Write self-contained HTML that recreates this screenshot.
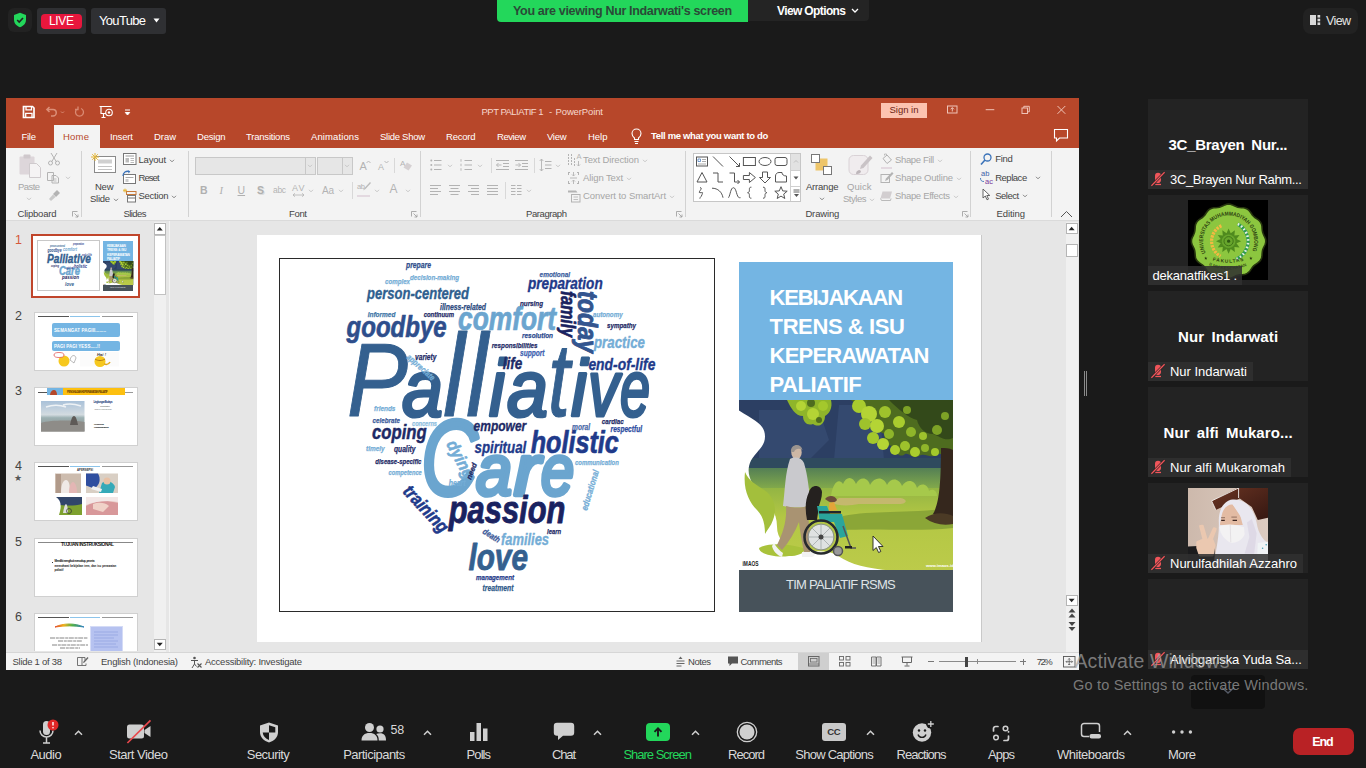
<!DOCTYPE html>
<html lang="en">
<head>
<meta charset="utf-8">
<title>Zoom Meeting</title>
<style>
*{box-sizing:border-box;margin:0;padding:0}
html,body{width:1366px;height:768px;overflow:hidden;background:#1a1a1a;font-family:"Liberation Sans",sans-serif;color:#fff}
#root{position:relative;width:1366px;height:768px;overflow:hidden;background:#1a1a1a}
.a{position:absolute;display:block}
.t{position:absolute;white-space:nowrap;display:block}
svg{overflow:visible}
</style>
</head>
<body>
<div id="root">
<!-- zoom top bar -->
<div class="a" style="left:8px;top:8px;width:24px;height:24px;background:#222;border-radius:6px"></div>
<svg class="a" style="left:13px;top:12px;" width="14" height="16" viewBox="0 0 14 16" fill="none"><path d="M7 .8l6 2.2v4.5c0 4-2.6 6.5-6 7.7-3.4-1.2-6-3.7-6-7.7v-4.5z" fill="#23d75b"/><path d="M4.2 8l2 2 3.8-4" stroke="#222" stroke-width="1.6"/></svg>
<div class="a" style="left:37px;top:8px;width:49px;height:26px;background:#2f3033;border-radius:3px"></div>
<div class="a" style="left:41px;top:13.5px;width:41px;height:15px;background:#e8173d;border-radius:4px"></div>
<span class="t" style="left:49px;top:13.5px;font-size:12px;line-height:15.6px;color:#fff;letter-spacing:-0.34px;">LIVE</span>
<div class="a" style="left:91px;top:8px;width:75px;height:26px;background:#2f3033;border-radius:3px"></div>
<span class="t" style="left:99px;top:12.6px;font-size:13px;line-height:16.9px;color:#fff;letter-spacing:-0.68px;">YouTube</span>
<svg class="a" style="left:152px;top:18px;" width="10" height="6" viewBox="0 0 10 6" fill="none"><path d="M1.5 .5h6l-3 4z" fill="#fff"/></svg>
<div class="a" style="left:497px;top:0px;width:251px;height:22px;background:#23d75b;border-radius:0 0 0 4px"></div>
<span class="t" style="left:513px;top:3.2px;font-size:12.5px;line-height:16.2px;color:#2a4a37;font-weight:bold;letter-spacing:-0.33px;">You are viewing Nur Indarwati's screen</span>
<div class="a" style="left:748px;top:0px;width:121px;height:21px;background:#242424;border-radius:0 0 4px 0"></div>
<span class="t" style="left:777px;top:3.5px;font-size:12px;line-height:15.6px;color:#fff;font-weight:bold;letter-spacing:-0.62px;">View Options</span>
<svg class="a" style="left:851px;top:8px;" width="8" height="6" viewBox="0 0 8 6" fill="none"><path d="M1 1l3 3 3-3" stroke="#fff" stroke-width="1.3"/></svg>
<div class="a" style="left:1303px;top:8px;width:55px;height:26px;background:#222;border-radius:8px"></div>
<svg class="a" style="left:1310px;top:15px;" width="11" height="10" viewBox="0 0 11 10" fill="none"><rect x="0" y="0" width="6" height="10" fill="#d8d8d8"/><rect x="7.5" y="0" width="2.7" height="2.6" fill="#d8d8d8"/><rect x="7.5" y="3.7" width="2.7" height="2.6" fill="#d8d8d8"/><rect x="7.5" y="7.4" width="2.7" height="2.6" fill="#d8d8d8"/></svg>
<span class="t" style="left:1326px;top:12.9px;font-size:12.5px;line-height:16.2px;color:#e4e4e4;letter-spacing:-0.62px;">View</span>
<!-- powerpoint frame -->
<div class="a" style="left:6px;top:98px;width:1073px;height:572px;background:#e6e6e6;"></div>
<div class="a" style="left:6px;top:98px;width:1073px;height:50px;background:#b7472a;"></div>
<svg class="a" style="left:21px;top:104px;" width="120" height="16" viewBox="0 0 120 16" fill="none"><path d="M2.5 2.5h9l1.5 1.5v9.5h-10.5z" stroke="#fff" stroke-width="1.7"/><path d="M5 2.5v3.3h5.5v-3.3 M4.7 13.5v-4.2h6.3v4.2" stroke="#fff" stroke-width="1.3"/><path d="M26 5.5h6a3.2 3.2 0 0 1 0 6.5h-2 M28.5 3l-2.6 2.5 2.6 2.5" stroke="#dc8f78" stroke-width="1.5"/><path d="M40 7.5l1.5 1.5 1.5-1.5" stroke="#d98a73" stroke-width="1"/><path d="M57 4.5a4 4 0 1 0 3 0 M57 2.5v3h-3" stroke="#d98a73" stroke-width="1.3"/><path d="M78.5 2.5h12 M80 2.5v7h5 M84.5 13.5h-4 M82.5 9.5v4" stroke="#fff" stroke-width="1.2"/><circle cx="88" cy="8.5" r="3.3" stroke="#fff" stroke-width="1.1"/><circle cx="88" cy="8.5" r="1.2" fill="#fff"/><path d="M104 6h5 M104.3 8.5h4.4l-2.2 2.5z" stroke="#fff" stroke-width="1" fill="#fff"/></svg>
<span class="t" style="left:481.5px;top:105.8px;font-size:9.5px;line-height:12.3px;color:#f6d8ce;letter-spacing:-0.51px;">PPT PALIATIF 1</span>
<span class="t" style="left:549px;top:105.8px;font-size:9.5px;line-height:12.3px;color:#f6d8ce;">-</span>
<span class="t" style="left:555.5px;top:105.8px;font-size:9.5px;line-height:12.3px;color:#f6d8ce;letter-spacing:-0.12px;">PowerPoint</span>
<div class="a" style="left:881px;top:103px;width:46px;height:15px;background:#fcc3b0;"></div>
<span class="t" style="left:889.5px;top:104.3px;font-size:9.5px;line-height:12.3px;color:#6e2413;letter-spacing:-0.01px;">Sign in</span>
<svg class="a" style="left:942px;top:102px;" width="132" height="16" viewBox="0 0 132 16" fill="none"><rect x="5.5" y="4" width="9.5" height="7" stroke="#efc4b7" stroke-width="1"/><path d="M10.3 9.5v-3.8 M8.6 7.3l1.7-1.7 1.7 1.7" stroke="#efc4b7" stroke-width="1"/><path d="M43.7 7.7h8.6" stroke="#efc4b7" stroke-width="1"/><rect x="80" y="6" width="5.5" height="5.5" stroke="#efc4b7" stroke-width="1"/><path d="M81.8 6v-1.7h5.5v5.5h-1.8" stroke="#efc4b7" stroke-width="1"/><path d="M115.5 4l7.8 7.8 M123.3 4l-7.8 7.8" stroke="#efc4b7" stroke-width="1"/></svg>
<div class="a" style="left:54px;top:125px;width:45.5px;height:23px;background:#f3f3f3;"></div>
<span class="t" style="left:21.5px;top:130.7px;font-size:9.5px;line-height:12.3px;color:#fff;letter-spacing:-0.27px;">File</span>
<span class="t" style="left:63px;top:130.7px;font-size:9.5px;line-height:12.3px;color:#b7472a;letter-spacing:0.22px;">Home</span>
<span class="t" style="left:110px;top:130.7px;font-size:9.5px;line-height:12.3px;color:#fff;letter-spacing:-0.15px;">Insert</span>
<span class="t" style="left:154px;top:130.7px;font-size:9.5px;line-height:12.3px;color:#fff;letter-spacing:-0.06px;">Draw</span>
<span class="t" style="left:197px;top:130.7px;font-size:9.5px;line-height:12.3px;color:#fff;letter-spacing:-0.21px;">Design</span>
<span class="t" style="left:246px;top:130.7px;font-size:9.5px;line-height:12.3px;color:#fff;letter-spacing:-0.21px;">Transitions</span>
<span class="t" style="left:311px;top:130.7px;font-size:9.5px;line-height:12.3px;color:#fff;letter-spacing:0.11px;">Animations</span>
<span class="t" style="left:380px;top:130.7px;font-size:9.5px;line-height:12.3px;color:#fff;letter-spacing:-0.28px;">Slide Show</span>
<span class="t" style="left:446px;top:130.7px;font-size:9.5px;line-height:12.3px;color:#fff;letter-spacing:-0.23px;">Record</span>
<span class="t" style="left:497px;top:130.7px;font-size:9.5px;line-height:12.3px;color:#fff;letter-spacing:-0.43px;">Review</span>
<span class="t" style="left:547px;top:130.7px;font-size:9.5px;line-height:12.3px;color:#fff;letter-spacing:-0.31px;">View</span>
<span class="t" style="left:588px;top:130.7px;font-size:9.5px;line-height:12.3px;color:#fff;letter-spacing:-0.01px;">Help</span>
<svg class="a" style="left:630px;top:127px;" width="14" height="18" viewBox="0 0 14 18" fill="none"><path d="M4.5 12.5v-1.5c-2-1.5-2.5-3-2.5-4.5a4.5 4.5 0 0 1 9 0c0 1.5-.5 3-2.5 4.5v1.5z M4.5 14.5h4 M5 16.5h3" stroke="#fff" stroke-width="1.1"/></svg>
<span class="t" style="left:651px;top:130.3px;font-size:9.5px;line-height:12.3px;color:#fff;font-weight:bold;letter-spacing:-0.33px;">Tell me what you want to do</span>
<svg class="a" style="left:1053px;top:127px;" width="16" height="16" viewBox="0 0 16 16" fill="none"><path d="M1.5 2.5h13v8.5h-8l-3 3v-3h-2z" stroke="#fff" stroke-width="1.1"/></svg>
<div class="a" style="left:6px;top:148px;width:1073px;height:72px;background:#f3f3f3;"></div>
<div class="a" style="left:6px;top:220px;width:1073px;height:1px;background:#dadada;"></div>
<div class="a" style="left:81px;top:151px;width:1px;height:66px;background:#d2d2d2;"></div>
<div class="a" style="left:188px;top:151px;width:1px;height:66px;background:#d2d2d2;"></div>
<div class="a" style="left:420px;top:151px;width:1px;height:66px;background:#d2d2d2;"></div>
<div class="a" style="left:685px;top:151px;width:1px;height:66px;background:#d2d2d2;"></div>
<div class="a" style="left:970px;top:151px;width:1px;height:66px;background:#d2d2d2;"></div>
<div class="a" style="left:1051px;top:151px;width:1px;height:66px;background:#d2d2d2;"></div>
<span class="t" style="left:17.5px;top:208.2px;font-size:9.5px;line-height:12.3px;color:#444;letter-spacing:-0.21px;">Clipboard</span>
<span class="t" style="left:123.5px;top:208.2px;font-size:9.5px;line-height:12.3px;color:#444;letter-spacing:-0.58px;">Slides</span>
<span class="t" style="left:289px;top:208.2px;font-size:9.5px;line-height:12.3px;color:#444;letter-spacing:-0.34px;">Font</span>
<span class="t" style="left:526px;top:208.2px;font-size:9.5px;line-height:12.3px;color:#444;letter-spacing:-0.42px;">Paragraph</span>
<span class="t" style="left:805.4px;top:208.2px;font-size:9.5px;line-height:12.3px;color:#444;letter-spacing:-0.14px;">Drawing</span>
<span class="t" style="left:996.5px;top:208.2px;font-size:9.5px;line-height:12.3px;color:#444;letter-spacing:-0.09px;">Editing</span>
<svg class="a" style="left:72px;top:211px;" width="7" height="7" viewBox="0 0 7 7" fill="none"><path d="M.5 .5h5 M.5 .5v5 M2.5 2.5l3.5 3.5 M6 3.5v2.5h-2.5" stroke="#999" stroke-width=".8"/></svg>
<svg class="a" style="left:411px;top:211px;" width="7" height="7" viewBox="0 0 7 7" fill="none"><path d="M.5 .5h5 M.5 .5v5 M2.5 2.5l3.5 3.5 M6 3.5v2.5h-2.5" stroke="#999" stroke-width=".8"/></svg>
<svg class="a" style="left:676px;top:211px;" width="7" height="7" viewBox="0 0 7 7" fill="none"><path d="M.5 .5h5 M.5 .5v5 M2.5 2.5l3.5 3.5 M6 3.5v2.5h-2.5" stroke="#999" stroke-width=".8"/></svg>
<svg class="a" style="left:962px;top:211px;" width="7" height="7" viewBox="0 0 7 7" fill="none"><path d="M.5 .5h5 M.5 .5v5 M2.5 2.5l3.5 3.5 M6 3.5v2.5h-2.5" stroke="#999" stroke-width=".8"/></svg>
<svg class="a" style="left:18px;top:153px;" width="25" height="26" viewBox="0 0 25 26" fill="none"><rect x="1.5" y="3.5" width="15" height="18" rx="1" fill="#ddd6da"/><rect x="5.5" y="1.5" width="7" height="4" rx="1" fill="#cfc8cc"/><path d="M11.5 10.5h7l4 4v10h-11z" fill="#f5f3f4" stroke="#cfcacd" stroke-width="1"/></svg>
<span class="t" style="left:18px;top:180.5px;font-size:9.5px;line-height:12.3px;color:#a6a6a6;letter-spacing:-0.57px;">Paste</span>
<svg class="a" style="left:25.5px;top:197px;" width="6" height="4" viewBox="0 0 6 4" fill="none"><path d="M1 .8l2 2 2-2" stroke="#c2c2c2" stroke-width=".9"/></svg>
<svg class="a" style="left:47px;top:152px;" width="14" height="14" viewBox="0 0 14 14" fill="none"><path d="M4 1l5.5 9 M10 1l-5.5 9" stroke="#b3b3b3" stroke-width="1"/><circle cx="3.5" cy="11" r="2" stroke="#b3b3b3"/><circle cx="10.5" cy="11" r="2" stroke="#b3b3b3"/></svg>
<svg class="a" style="left:46px;top:171px;" width="15" height="13" viewBox="0 0 15 13" fill="none"><path d="M1.5 1.5h6v8h-6z M6 4.5h4l2.5 2.5v5h-6.5z" stroke="#b3b3b3" stroke-width="1" fill="#f3f3f3"/><path d="M7.5 8h3 M7.5 10h3" stroke="#b3b3b3" stroke-width=".8"/></svg>
<svg class="a" style="left:65px;top:176px;" width="6" height="4" viewBox="0 0 6 4" fill="none"><path d="M1 .8l2 2 2-2" stroke="#c2c2c2" stroke-width=".9"/></svg>
<svg class="a" style="left:48px;top:189px;" width="13" height="13" viewBox="0 0 13 13" fill="none"><path d="M9 1l3 3-4 4-3-3z" fill="#b3b3b3"/><path d="M5 5.5l2.5 2.5-4.5 4-2-2z" fill="#c9c9c9"/></svg>
<svg class="a" style="left:90px;top:152px;" width="27" height="23" viewBox="0 0 27 23" fill="none"><rect x="4.5" y="4.5" width="21" height="16" fill="#fff" stroke="#8a8a8a"/><rect x="8" y="7.5" width="14" height="4" fill="#d0d0d0"/><path d="M8 14.5h14 M8 17.5h14" stroke="#c4c4c4"/><path d="M5 1v8 M1 5h8 M2.2 2.2l5.6 5.6 M7.8 2.2l-5.6 5.6" stroke="#e4b73a" stroke-width="1"/></svg>
<span class="t" style="left:95px;top:180.5px;font-size:9.5px;line-height:12.3px;color:#444;letter-spacing:-0.25px;">New</span>
<span class="t" style="left:90px;top:193.2px;font-size:9.5px;line-height:12.3px;color:#444;letter-spacing:-0.28px;">Slide</span>
<svg class="a" style="left:112.5px;top:198px;" width="6" height="4" viewBox="0 0 6 4" fill="none"><path d="M1 .8l2 2 2-2" stroke="#777" stroke-width=".9"/></svg>
<svg class="a" style="left:123px;top:153px;" width="14" height="13" viewBox="0 0 14 13" fill="none"><rect x=".5" y=".5" width="12.5" height="11" fill="#fff" stroke="#777"/><path d="M2.5 3h8.5" stroke="#999"/><rect x="2.5" y="5" width="3.5" height="4.5" fill="#bbb"/><path d="M7.5 5.5h3.5 M7.5 7.5h3.5 M7.5 9.5h3.5" stroke="#aaa" stroke-width=".8"/></svg>
<span class="t" style="left:138.5px;top:153.8px;font-size:9.5px;line-height:12.3px;color:#444;letter-spacing:-0.2px;">Layout</span>
<svg class="a" style="left:169px;top:158.5px;" width="6" height="4" viewBox="0 0 6 4" fill="none"><path d="M1 .8l2 2 2-2" stroke="#777" stroke-width=".9"/></svg>
<svg class="a" style="left:122px;top:170px;" width="15" height="14" viewBox="0 0 15 14" fill="none"><rect x="1.5" y="4.5" width="12" height="9" fill="#fff" stroke="#777"/><path d="M3.5 7.5h8" stroke="#aaa"/><rect x="3.5" y="9" width="3" height="3" fill="#ccc"/><path d="M1 6c0-3.5 3-5.5 6.5-4.5" stroke="#3b73b9" stroke-width="1.3"/><path d="M6 .3l2.3 1.3-1.8 1.8z" fill="#3b73b9"/></svg>
<span class="t" style="left:138.5px;top:172px;font-size:9.5px;line-height:12.3px;color:#444;letter-spacing:-0.95px;">Reset</span>
<svg class="a" style="left:122px;top:188px;" width="15" height="15" viewBox="0 0 15 15" fill="none"><path d="M1 2.5h4 M3 .5v4 M1.5 1l3 3 M4.5 1l-3 3" stroke="#e4b73a" stroke-width=".8"/><rect x="4.5" y="3.5" width="9.5" height="3" fill="#f3f3f3" stroke="#c87b3c"/><rect x="5.5" y="7.5" width="8" height="6.5" fill="#fff" stroke="#777"/><path d="M5.5 10h8" stroke="#777"/></svg>
<span class="t" style="left:138.5px;top:189.8px;font-size:9.5px;line-height:12.3px;color:#444;letter-spacing:-0.28px;">Section</span>
<svg class="a" style="left:171px;top:194.5px;" width="6" height="4" viewBox="0 0 6 4" fill="none"><path d="M1 .8l2 2 2-2" stroke="#777" stroke-width=".9"/></svg>
<div class="a" style="left:195px;top:157px;width:120.5px;height:17.5px;background:#e6e6e6;border:1px solid #c8c8c8"></div>
<div class="a" style="left:304.5px;top:158px;width:1px;height:15.5px;background:#c8c8c8;"></div>
<svg class="a" style="left:307px;top:164px;" width="6" height="4" viewBox="0 0 6 4" fill="none"><path d="M1 .8l2 2 2-2" stroke="#c2c2c2" stroke-width=".9"/></svg>
<div class="a" style="left:316.5px;top:157px;width:36px;height:17.5px;background:#e6e6e6;border:1px solid #c8c8c8"></div>
<div class="a" style="left:341.5px;top:158px;width:1px;height:15.5px;background:#c8c8c8;"></div>
<svg class="a" style="left:344px;top:164px;" width="6" height="4" viewBox="0 0 6 4" fill="none"><path d="M1 .8l2 2 2-2" stroke="#c2c2c2" stroke-width=".9"/></svg>
<span class="t" style="left:359.5px;top:159.3px;font-size:11px;line-height:14.3px;color:#b3b3b3;">A</span>
<svg class="a" style="left:366px;top:160px;" width="5" height="4" viewBox="0 0 5 4" fill="none"><path d="M.5 3l2-2 2 2" stroke="#b3b3b3" stroke-width=".9"/></svg>
<span class="t" style="left:378px;top:161.7px;font-size:9px;line-height:11.7px;color:#b3b3b3;">A</span>
<svg class="a" style="left:384px;top:160px;" width="5" height="4" viewBox="0 0 5 4" fill="none"><path d="M.5 1l2 2 2-2" stroke="#b3b3b3" stroke-width=".9"/></svg>
<div class="a" style="left:393.5px;top:158px;width:1px;height:15px;background:#d8d8d8;"></div>
<span class="t" style="left:400px;top:158.8px;font-size:8px;line-height:10.4px;color:#b3b3b3;">A</span>
<svg class="a" style="left:403px;top:162px;" width="10" height="9" viewBox="0 0 10 9" fill="none"><path d="M4 .5l5 3-3.5 5-5-3z" fill="#d5d0d2"/></svg>
<span class="t" style="left:200px;top:183.7px;font-size:10.5px;line-height:13.7px;color:#b0b0b0;font-weight:bold;">B</span>
<span class="t" style="left:219.5px;top:183.7px;font-size:10.5px;line-height:13.7px;color:#b0b0b0;font-style:italic;font-family:Liberation Serif,serif;">I</span>
<span class="t" style="left:237.5px;top:183.7px;font-size:10.5px;line-height:13.7px;color:#b0b0b0;text-decoration:underline;">U</span>
<span class="t" style="left:257px;top:183.7px;font-size:10.5px;line-height:13.7px;color:#b0b0b0;font-weight:bold;text-shadow:1px 1px 0 #ddd;">S</span>
<span class="t" style="left:273px;top:184.9px;font-size:8.5px;line-height:11.1px;color:#b3b3b3;letter-spacing:-0.35px;">abc</span>
<span class="t" style="left:292px;top:182.7px;font-size:9px;line-height:11.7px;color:#b3b3b3;letter-spacing:1.16px;">AV</span>
<svg class="a" style="left:292px;top:193px;" width="13" height="4" viewBox="0 0 13 4" fill="none"><path d="M1 2h11 M3 .3l-2 1.7 2 1.7 M10 .3l2 1.7-2 1.7" stroke="#b3b3b3" stroke-width=".8"/></svg>
<svg class="a" style="left:308px;top:188.5px;" width="6" height="4" viewBox="0 0 6 4" fill="none"><path d="M1 .8l2 2 2-2" stroke="#c2c2c2" stroke-width=".9"/></svg>
<span class="t" style="left:322px;top:184px;font-size:10px;line-height:13px;color:#b3b3b3;letter-spacing:-0.23px;">Aa</span>
<svg class="a" style="left:338px;top:188.5px;" width="6" height="4" viewBox="0 0 6 4" fill="none"><path d="M1 .8l2 2 2-2" stroke="#c2c2c2" stroke-width=".9"/></svg>
<div class="a" style="left:351.5px;top:182px;width:1px;height:17px;background:#d8d8d8;"></div>
<span class="t" style="left:357px;top:182.1px;font-size:7.5px;line-height:9.8px;color:#b3b3b3;letter-spacing:-0.34px;">ab</span>
<svg class="a" style="left:361px;top:181px;" width="10" height="10" viewBox="0 0 10 10" fill="none"><path d="M9 1l-5.5 6-1.5 2.5 2.5-1.5 5.5-6z" fill="#bbb"/></svg>
<div class="a" style="left:357px;top:194.5px;width:13px;height:2px;background:#e3d9e0;"></div>
<svg class="a" style="left:374px;top:188.5px;" width="6" height="4" viewBox="0 0 6 4" fill="none"><path d="M1 .8l2 2 2-2" stroke="#c2c2c2" stroke-width=".9"/></svg>
<span class="t" style="left:389.5px;top:182.2px;font-size:12px;line-height:15.6px;color:#b3b3b3;">A</span>
<svg class="a" style="left:405px;top:188.5px;" width="6" height="4" viewBox="0 0 6 4" fill="none"><path d="M1 .8l2 2 2-2" stroke="#c2c2c2" stroke-width=".9"/></svg>
<svg class="a" style="left:430px;top:159px;" width="12" height="12" viewBox="0 0 12 12" fill="none"><circle cx="1.3" cy="1.5" r="1" fill="#b3b3b3"/><path d="M4 1.5h7.5" stroke="#b3b3b3"/><circle cx="1.3" cy="6" r="1" fill="#b3b3b3"/><path d="M4 6h7.5" stroke="#b3b3b3"/><circle cx="1.3" cy="10.5" r="1" fill="#b3b3b3"/><path d="M4 10.5h7.5" stroke="#b3b3b3"/></svg>
<svg class="a" style="left:447px;top:163.5px;" width="6" height="4" viewBox="0 0 6 4" fill="none"><path d="M1 .8l2 2 2-2" stroke="#c2c2c2" stroke-width=".9"/></svg>
<svg class="a" style="left:460px;top:159px;" width="13" height="12" viewBox="0 0 13 12" fill="none"><path d="M1 0.2v2.5" stroke="#b3b3b3" stroke-width=".9"/><path d="M4.5 1.5h7.5" stroke="#b3b3b3"/><path d="M1 4.7v2.5" stroke="#b3b3b3" stroke-width=".9"/><path d="M4.5 6h7.5" stroke="#b3b3b3"/><path d="M1 9.2v2.5" stroke="#b3b3b3" stroke-width=".9"/><path d="M4.5 10.5h7.5" stroke="#b3b3b3"/></svg>
<svg class="a" style="left:477px;top:163.5px;" width="6" height="4" viewBox="0 0 6 4" fill="none"><path d="M1 .8l2 2 2-2" stroke="#c2c2c2" stroke-width=".9"/></svg>
<div class="a" style="left:490.5px;top:158px;width:1px;height:15px;background:#d8d8d8;"></div>
<svg class="a" style="left:496px;top:159px;" width="14" height="12" viewBox="0 0 14 12" fill="none"><path d="M0 1.5h13" stroke="#b3b3b3" stroke-width="1"/><path d="M7 4.5h6" stroke="#b3b3b3" stroke-width="1"/><path d="M7 7.5h6" stroke="#b3b3b3" stroke-width="1"/><path d="M0 10.5h13" stroke="#b3b3b3" stroke-width="1"/><path d="M5.5 6h-5 M2.5 4l-2 2 2 2" stroke="#b3b3b3" stroke-width=".9"/></svg>
<svg class="a" style="left:515px;top:159px;" width="14" height="12" viewBox="0 0 14 12" fill="none"><path d="M0 1.5h13" stroke="#b3b3b3" stroke-width="1"/><path d="M7 4.5h6" stroke="#b3b3b3" stroke-width="1"/><path d="M7 7.5h6" stroke="#b3b3b3" stroke-width="1"/><path d="M0 10.5h13" stroke="#b3b3b3" stroke-width="1"/><path d="M.5 6h5 M3.5 4l2 2-2 2" stroke="#b3b3b3" stroke-width=".9"/></svg>
<div class="a" style="left:533.5px;top:158px;width:1px;height:15px;background:#d8d8d8;"></div>
<svg class="a" style="left:539px;top:158px;" width="13" height="14" viewBox="0 0 13 14" fill="none"><path d="M2.5 1v12 M.7 3l1.8-2 1.8 2 M.7 11l1.8 2 1.8-2" stroke="#b3b3b3" stroke-width=".9"/><path d="M6 3.5h6.5" stroke="#b3b3b3" stroke-width="1"/><path d="M6 7h6.5" stroke="#b3b3b3" stroke-width="1"/><path d="M6 10.5h6.5" stroke="#b3b3b3" stroke-width="1"/></svg>
<svg class="a" style="left:555px;top:163.5px;" width="6" height="4" viewBox="0 0 6 4" fill="none"><path d="M1 .8l2 2 2-2" stroke="#c2c2c2" stroke-width=".9"/></svg>
<svg class="a" style="left:430px;top:185px;" width="12" height="10" viewBox="0 0 12 10" fill="none"><path d="M0 0.5h11" stroke="#b3b3b3" stroke-width="1"/><path d="M0 3.5h8" stroke="#b3b3b3" stroke-width="1"/><path d="M0 6.5h11" stroke="#b3b3b3" stroke-width="1"/><path d="M0 9.5h8" stroke="#b3b3b3" stroke-width="1"/></svg>
<svg class="a" style="left:449px;top:185px;" width="12" height="10" viewBox="0 0 12 10" fill="none"><path d="M0 0.5h11" stroke="#b3b3b3" stroke-width="1"/><path d="M1.5 3.5h8" stroke="#b3b3b3" stroke-width="1"/><path d="M0 6.5h11" stroke="#b3b3b3" stroke-width="1"/><path d="M1.5 9.5h8" stroke="#b3b3b3" stroke-width="1"/></svg>
<svg class="a" style="left:468px;top:185px;" width="12" height="10" viewBox="0 0 12 10" fill="none"><path d="M0 0.5h11" stroke="#b3b3b3" stroke-width="1"/><path d="M3 3.5h8" stroke="#b3b3b3" stroke-width="1"/><path d="M0 6.5h11" stroke="#b3b3b3" stroke-width="1"/><path d="M3 9.5h8" stroke="#b3b3b3" stroke-width="1"/></svg>
<svg class="a" style="left:487px;top:185px;" width="12" height="10" viewBox="0 0 12 10" fill="none"><path d="M0 0.5h11" stroke="#b3b3b3" stroke-width="1"/><path d="M0 3.5h11" stroke="#b3b3b3" stroke-width="1"/><path d="M0 6.5h11" stroke="#b3b3b3" stroke-width="1"/><path d="M0 9.5h11" stroke="#b3b3b3" stroke-width="1"/></svg>
<div class="a" style="left:504.5px;top:182px;width:1px;height:17px;background:#d8d8d8;"></div>
<svg class="a" style="left:511px;top:185px;" width="11" height="10" viewBox="0 0 11 10" fill="none"><path d="M0 0.5h4.5" stroke="#b3b3b3" stroke-width="1"/><path d="M0 3.5h4.5" stroke="#b3b3b3" stroke-width="1"/><path d="M0 6.5h4.5" stroke="#b3b3b3" stroke-width="1"/><path d="M0 9.5h4.5" stroke="#b3b3b3" stroke-width="1"/><path d="M6 0.5h4.5" stroke="#b3b3b3" stroke-width="1"/><path d="M6 3.5h4.5" stroke="#b3b3b3" stroke-width="1"/><path d="M6 6.5h4.5" stroke="#b3b3b3" stroke-width="1"/><path d="M6 9.5h4.5" stroke="#b3b3b3" stroke-width="1"/></svg>
<svg class="a" style="left:526px;top:188.5px;" width="6" height="4" viewBox="0 0 6 4" fill="none"><path d="M1 .8l2 2 2-2" stroke="#c2c2c2" stroke-width=".9"/></svg>
<svg class="a" style="left:567px;top:153px;" width="14" height="14" viewBox="0 0 14 14" fill="none"><path d="M1.5 1v12 M4.5 1v12 M7.5 5v8" stroke="#b3b3b3" stroke-dasharray="2 1"/><path d="M11.5 8v5 M10 11.5l1.5 1.5 1.5-1.5" stroke="#b3b3b3" stroke-width=".9"/></svg>
<span class="t" style="left:576.5px;top:151.6px;font-size:7.5px;line-height:9.8px;color:#b3b3b3;">A</span>
<span class="t" style="left:583px;top:153.8px;font-size:9.5px;line-height:12.3px;color:#a6a6a6;letter-spacing:-0.12px;">Text Direction</span>
<svg class="a" style="left:642px;top:158.5px;" width="6" height="4" viewBox="0 0 6 4" fill="none"><path d="M1 .8l2 2 2-2" stroke="#c2c2c2" stroke-width=".9"/></svg>
<svg class="a" style="left:567px;top:171px;" width="14" height="14" viewBox="0 0 14 14" fill="none"><path d="M1 1.5h2 M10 1.5h2 M1 12.5h2 M10 12.5h2 M1.5 1v3 M1.5 10v3 M11.5 1v3 M11.5 10v3" stroke="#b3b3b3"/><path d="M6.5 1v4 M6.5 13v-4 M5 3.5l1.5 1.5 1.5-1.5 M5 10.5l1.5-1.5 1.5 1.5 M3 7h7" stroke="#b3b3b3" stroke-width=".9"/></svg>
<span class="t" style="left:583px;top:171.8px;font-size:9.5px;line-height:12.3px;color:#a6a6a6;letter-spacing:-0.11px;">Align Text</span>
<svg class="a" style="left:626px;top:176.5px;" width="6" height="4" viewBox="0 0 6 4" fill="none"><path d="M1 .8l2 2 2-2" stroke="#c2c2c2" stroke-width=".9"/></svg>
<svg class="a" style="left:567px;top:189px;" width="14" height="14" viewBox="0 0 14 14" fill="none"><path d="M1 1.5h8l1.5 2h-9.5z" fill="#b3b3b3"/><rect x="4.5" y="5.5" width="8.5" height="7.5" fill="#f3f3f3" stroke="#b3b3b3"/><path d="M6.5 8h4.5 M6.5 10.5h4.5" stroke="#b3b3b3" stroke-width=".8"/></svg>
<span class="t" style="left:583px;top:189.8px;font-size:9.5px;line-height:12.3px;color:#a6a6a6;letter-spacing:-0.05px;">Convert to SmartArt</span>
<svg class="a" style="left:669px;top:194.5px;" width="6" height="4" viewBox="0 0 6 4" fill="none"><path d="M1 .8l2 2 2-2" stroke="#c2c2c2" stroke-width=".9"/></svg>
<div class="a" style="left:693.3px;top:153.3px;width:108px;height:48.5px;background:#fff;border:1px solid #c6c6c6"></div>
<div class="a" style="left:790.4px;top:154.3px;width:10px;height:16px;background:#e2e2e2;"></div>
<div class="a" style="left:790.4px;top:154.3px;width:1px;height:46.5px;background:#d0d0d0;"></div>
<div class="a" style="left:790.4px;top:170px;width:10px;height:1px;background:#d0d0d0;"></div>
<div class="a" style="left:790.4px;top:185.5px;width:10px;height:1px;background:#d0d0d0;"></div>
<svg class="a" style="left:793px;top:159px;" width="6" height="5" viewBox="0 0 6 5" fill="none"><path d="M1 3.5l2-2 2 2" stroke="#bbb" stroke-width=".9"/></svg>
<svg class="a" style="left:793px;top:176px;" width="6" height="4" viewBox="0 0 6 4" fill="none"><path d="M.5 .5h5l-2.5 3z" fill="#555"/></svg>
<svg class="a" style="left:792.5px;top:189px;" width="7" height="8" viewBox="0 0 7 8" fill="none"><path d="M.5 1h6 M.5 3h6" stroke="#555" stroke-width=".9"/><path d="M1 5h5l-2.5 3z" fill="#555"/></svg>
<svg class="a" style="left:693px;top:153px;" width="98" height="49" viewBox="0 0 98 49" fill="none"><g transform="translate(9 8.5)" stroke-width="1"><rect x="-5.5" y="-4.5" width="11" height="9" stroke="#555" fill="#fff"/><path d="M-4 -2.5h2.5v2.5h-2.5z" stroke="#3b73b9" stroke-width=".7"/><path d="M0 -2h4 M0 0h4 M-4 2.5h8" stroke="#888" stroke-width=".7"/></g><g transform="translate(25 8.5)" stroke-width="1"><path d="M-5 -5l10 10" stroke="#555"/></g><g transform="translate(41.5 8.5)" stroke-width="1"><path d="M-5 -5l10 10 M5 1.5v3.5h-3.5" stroke="#555"/></g><g transform="translate(56.4 8.5)" stroke-width="1"><rect x="-6" y="-4" width="12" height="8" stroke="#555"/></g><g transform="translate(72 8.5)" stroke-width="1"><ellipse cx="0" cy="0" rx="6" ry="4" stroke="#555"/></g><g transform="translate(88 8.5)" stroke-width="1"><rect x="-6" y="-4" width="12" height="8" rx="2" stroke="#555"/></g><g transform="translate(9 24.5)" stroke-width="1"><path d="M0 -5l5 9.5h-10z" stroke="#555"/></g><g transform="translate(25 24.5)" stroke-width="1"><path d="M-5 -4.5h5v9h5" stroke="#555"/></g><g transform="translate(41.5 24.5)" stroke-width="1"><path d="M-5 -4.5h5v9h5 M3 2.5l2 2-2 2" stroke="#555"/></g><g transform="translate(56.4 24.5)" stroke-width="1"><path d="M-6 -2h6v-3l6 5-6 5v-3h-6z" stroke="#555"/></g><g transform="translate(72 24.5)" stroke-width="1"><path d="M-2.5 -5.5h5v5.5h3l-5.5 5.5-5.5-5.5h3z" stroke="#555"/></g><g transform="translate(88 24.5)" stroke-width="1"><path d="M-5.5 4.5v-6c0-2 1.5-3.5 3.5-3.5h3c0 2 1.5 3.5 4.5 3.5v6z" stroke="#555"/></g><g transform="translate(9 39.7)" stroke-width="1"><path d="M-2 -5c4 0-3 5 0 5s3-1 2 2-3 3-2 4" stroke="#555"/></g><g transform="translate(25 39.7)" stroke-width="1"><path d="M-6 -4.5c6 0 10 4 11 9.5" stroke="#555"/></g><g transform="translate(41.5 39.7)" stroke-width="1"><path d="M-6 5c2-3 2-10 5-10s3 10 6 10h1" stroke="#555"/></g><g transform="translate(56.4 39.7)" stroke-width="1"><path d="M2 -5.5c-2 0-2 .8-2 2.5s0 2.5-1.8 3c1.8 .5 1.8 1.3 1.8 3s0 2.5 2 2.5" stroke="#555"/></g><g transform="translate(72 39.7)" stroke-width="1"><path d="M-2 -5.5c2 0 2 .8 2 2.5s0 2.5 1.8 3c-1.8 .5-1.8 1.3-1.8 3s0 2.5-2 2.5" stroke="#555"/></g><g transform="translate(88 39.7)" stroke-width="1"><path d="M0 -6l1.7 4.2 4.5.3-3.5 2.9 1.1 4.4-3.8-2.4-3.8 2.4 1.1-4.4-3.5-2.9 4.5-.3z" stroke="#555"/></g></svg>
<svg class="a" style="left:810px;top:153px;" width="24" height="24" viewBox="0 0 24 24" fill="none"><rect x="5.5" y="5.5" width="12" height="12" fill="#eec56a"/><rect x="1.5" y="1.5" width="8" height="8" fill="#fff" stroke="#777"/><rect x="13.5" y="13.5" width="8" height="8" fill="#fff" stroke="#777"/></svg>
<span class="t" style="left:806px;top:180.7px;font-size:9.5px;line-height:12.3px;color:#444;letter-spacing:-0.22px;">Arrange</span>
<svg class="a" style="left:819px;top:196.7px;" width="6" height="4" viewBox="0 0 6 4" fill="none"><path d="M1 .8l2 2 2-2" stroke="#777" stroke-width=".9"/></svg>
<svg class="a" style="left:847px;top:153px;" width="27" height="27" viewBox="0 0 27 27" fill="none"><rect x="2" y="2.5" width="19" height="19" rx="4.5" fill="#f0ecee" stroke="#d9d2d6"/><path d="M25.5 5l-9 10-3.5 1 1-3.5 9-10z" fill="#c9c3c6"/><path d="M12.5 17c-1.5 0-3.5 1-3.5 4 2.5.5 5-1 5-3z" fill="#bdb6ba"/></svg>
<span class="t" style="left:847px;top:180.8px;font-size:9.5px;line-height:12.3px;color:#a6a6a6;letter-spacing:0.05px;">Quick</span>
<span class="t" style="left:843px;top:193.2px;font-size:9.5px;line-height:12.3px;color:#a6a6a6;letter-spacing:-0.47px;">Styles</span>
<svg class="a" style="left:868.5px;top:197.5px;" width="6" height="4" viewBox="0 0 6 4" fill="none"><path d="M1 .8l2 2 2-2" stroke="#c2c2c2" stroke-width=".9"/></svg>
<svg class="a" style="left:880px;top:153px;" width="13" height="14" viewBox="0 0 13 14" fill="none"><path d="M3 5.5l4-3.5 4.5 5-4.5 3.5z" stroke="#b3b3b3" fill="#f3f3f3"/><path d="M4.5 2.5v-1.5h2v2" stroke="#b3b3b3" stroke-width=".8"/></svg>
<div class="a" style="left:880.5px;top:167px;width:11px;height:1.5px;background:#e3d9e0;"></div>
<span class="t" style="left:895px;top:153.8px;font-size:9.5px;line-height:12.3px;color:#a6a6a6;letter-spacing:-0.36px;">Shape Fill</span>
<svg class="a" style="left:937px;top:158.5px;" width="6" height="4" viewBox="0 0 6 4" fill="none"><path d="M1 .8l2 2 2-2" stroke="#c2c2c2" stroke-width=".9"/></svg>
<svg class="a" style="left:880px;top:171px;" width="14" height="13" viewBox="0 0 14 13" fill="none"><rect x="1" y="3.5" width="8.5" height="8" stroke="#b3b3b3" fill="none"/><path d="M12 1l-6 6.5-1 2.5 2.5-1 6-6.5z" fill="#b3b3b3"/></svg>
<span class="t" style="left:895px;top:171.8px;font-size:9.5px;line-height:12.3px;color:#a6a6a6;letter-spacing:-0.18px;">Shape Outline</span>
<svg class="a" style="left:955.5px;top:176.5px;" width="6" height="4" viewBox="0 0 6 4" fill="none"><path d="M1 .8l2 2 2-2" stroke="#c2c2c2" stroke-width=".9"/></svg>
<svg class="a" style="left:879px;top:190px;" width="15" height="12" viewBox="0 0 15 12" fill="none"><path d="M3.5 1.5h9.5l-2 7h-9.5z" fill="#d2ced0"/><path d="M1.5 8.5l1 2h9l.5-2" stroke="#b3b3b3" stroke-width=".9"/></svg>
<span class="t" style="left:895px;top:189.8px;font-size:9.5px;line-height:12.3px;color:#a6a6a6;letter-spacing:-0.33px;">Shape Effects</span>
<svg class="a" style="left:952.5px;top:194.5px;" width="6" height="4" viewBox="0 0 6 4" fill="none"><path d="M1 .8l2 2 2-2" stroke="#c2c2c2" stroke-width=".9"/></svg>
<svg class="a" style="left:980px;top:153px;" width="13" height="13" viewBox="0 0 13 13" fill="none"><circle cx="7.5" cy="4.5" r="3.5" stroke="#3b73b9" stroke-width="1.3"/><path d="M5 7l-4 4.5" stroke="#3b73b9" stroke-width="1.6"/></svg>
<span class="t" style="left:995.2px;top:153.4px;font-size:9.5px;line-height:12.3px;color:#444;letter-spacing:-0.33px;">Find</span>
<span class="t" style="left:981px;top:168.6px;font-size:7.5px;line-height:9.8px;color:#3b5ea9;letter-spacing:0.16px;">ab</span>
<span class="t" style="left:985px;top:176.6px;font-size:7.5px;line-height:9.8px;color:#7a3b9a;letter-spacing:0.08px;">ac</span>
<svg class="a" style="left:980px;top:178px;" width="5" height="5" viewBox="0 0 5 5" fill="none"><path d="M.5 0c0 2.5 1 3.5 3.5 3.5" stroke="#3b73b9" stroke-width=".9"/></svg>
<span class="t" style="left:995.2px;top:171.7px;font-size:9.5px;line-height:12.3px;color:#444;letter-spacing:-0.48px;">Replace</span>
<svg class="a" style="left:1035px;top:176.3px;" width="6" height="4" viewBox="0 0 6 4" fill="none"><path d="M1 .8l2 2 2-2" stroke="#777" stroke-width=".9"/></svg>
<svg class="a" style="left:982px;top:188px;" width="9" height="13" viewBox="0 0 9 13" fill="none"><path d="M1 1v9l2.3-2 1.7 3.8 1.5-.7-1.7-3.6h3z" stroke="#555" stroke-width=".9" fill="#fff"/></svg>
<span class="t" style="left:995.2px;top:189.5px;font-size:9.5px;line-height:12.3px;color:#444;letter-spacing:-0.48px;">Select</span>
<svg class="a" style="left:1022px;top:194.3px;" width="6" height="4" viewBox="0 0 6 4" fill="none"><path d="M1 .8l2 2 2-2" stroke="#777" stroke-width=".9"/></svg>
<svg class="a" style="left:1060px;top:210px;" width="13" height="8" viewBox="0 0 13 8" fill="none"><path d="M1 7l5.5-5.5 5.5 5.5" stroke="#555" stroke-width="1"/></svg>
<!-- panes -->
<div class="a" style="left:154px;top:222px;width:11.5px;height:430px;background:#f0f0f0;"></div>
<div class="a" style="left:154px;top:223.3px;width:11.5px;height:11.5px;background:#fff;border:1px solid #b5b5b5"></div>
<svg class="a" style="left:154px;top:223.3px;" width="11.5" height="11.5" viewBox="0 0 11.5 11.5" fill="none"><path d="M2.75 7.45l3 -3.5 3 3.5z" fill="#222"/></svg>
<div class="a" style="left:154px;top:235px;width:11.5px;height:59.5px;background:#fff;border:1px solid #c2c2c2"></div>
<div class="a" style="left:154px;top:639.3px;width:11.5px;height:11px;background:#fff;border:1px solid #b5b5b5"></div>
<svg class="a" style="left:154px;top:639.3px;" width="11.5" height="11" viewBox="0 0 11.5 11" fill="none"><path d="M2.75 3.8l3 3.5 3 -3.5z" fill="#222"/></svg>
<div class="a" style="left:168.5px;top:221px;width:1px;height:431px;background:#f4f4f4;"></div>
<div class="a" style="left:1066px;top:222px;width:11.5px;height:430px;background:#f0f0f0;"></div>
<div class="a" style="left:1066.3px;top:223.3px;width:11.3px;height:11px;background:#fff;border:1px solid #b5b5b5"></div>
<svg class="a" style="left:1066.3px;top:223.3px;" width="11.3" height="11" viewBox="0 0 11.3 11" fill="none"><path d="M2.65 7.2l3 -3.5 3 3.5z" fill="#222"/></svg>
<div class="a" style="left:1066.3px;top:244px;width:11.3px;height:12.5px;background:#fff;border:1px solid #b5b5b5"></div>
<div class="a" style="left:1066.3px;top:595px;width:11.3px;height:11px;background:#fff;border:1px solid #b5b5b5"></div>
<svg class="a" style="left:1066.3px;top:595px;" width="11.3" height="11" viewBox="0 0 11.3 11" fill="none"><path d="M2.65 3.8l3 3.5 3 -3.5z" fill="#222"/></svg>
<svg class="a" style="left:1067px;top:608px;" width="10" height="11" viewBox="0 0 10 11" fill="none"><path d="M1.5 4.5l3.5-4 3.5 4z M1.5 9.5l3.5-4 3.5 4z" fill="#444"/></svg>
<svg class="a" style="left:1067px;top:621px;" width="10" height="11" viewBox="0 0 10 11" fill="none"><path d="M1.5 1l3.5 4 3.5-4z M1.5 6l3.5 4 3.5-4z" fill="#444"/></svg>
<div class="a" style="left:1084px;top:371px;width:1px;height:25px;background:#8a8a8a;"></div>
<div class="a" style="left:1086px;top:371px;width:1px;height:25px;background:#8a8a8a;"></div>
<div class="a" style="left:31px;top:233.8px;width:109px;height:64.5px;background:#fff;border:2px solid #c0452b"></div>
<div class="a" style="left:37.3px;top:240px;width:62.5px;height:50.5px;background:#fff;border:.8px solid #c8c8c8"></div>
<svg class="a" style="left:37px;top:240px;" width="63" height="51" viewBox="37 240 63 51" fill="none"><g font-family="Liberation Sans,sans-serif" font-weight="bold" font-style="italic"><text x="47" y="263" font-size="13" textLength="44" lengthAdjust="spacingAndGlyphs" fill="#34608f" stroke="#34608f" stroke-width=".4">Palliative</text><text x="59" y="274.5" font-size="12" textLength="21" lengthAdjust="spacingAndGlyphs" fill="#6ba5cf" stroke="#6ba5cf" stroke-width=".4">Care</text><text x="47.5" y="251.5" font-size="4.5" textLength="14" lengthAdjust="spacingAndGlyphs" fill="#2e4e8c">goodbye</text><text x="63" y="250.5" font-size="4.5" textLength="14" lengthAdjust="spacingAndGlyphs" fill="#6ba5cf">comfort</text><text x="50" y="246.5" font-size="3" textLength="15" lengthAdjust="spacingAndGlyphs" fill="#2f5f8f">person-centered</text><text x="73" y="244.5" font-size="3" textLength="11" lengthAdjust="spacingAndGlyphs" fill="#1f3a8a">preparation</text><text x="82" y="255.5" font-size="3" textLength="10" lengthAdjust="spacingAndGlyphs" fill="#1f3a8a">end-of-life</text><text x="51" y="266.5" font-size="3.5" textLength="8" lengthAdjust="spacingAndGlyphs" fill="#1e2a66">coping</text><text x="74" y="268" font-size="5" textLength="13" lengthAdjust="spacingAndGlyphs" fill="#1f3a8a">holistic</text><text x="62" y="279" font-size="6" textLength="17" lengthAdjust="spacingAndGlyphs" fill="#1a2260">passion</text><text x="65" y="285.5" font-size="6" textLength="9" lengthAdjust="spacingAndGlyphs" fill="#34608f">love</text><text x="66" y="268.5" font-size="3" textLength="7.5" lengthAdjust="spacingAndGlyphs" fill="#1f3a8a">spiritual</text></g></svg>
<div class="a" style="left:102.8px;top:241px;width:30.5px;height:20px;background:#74b5e3;"></div>
<span class="t" style="left:107px;top:244.1px;font-size:3.2px;line-height:4.2px;color:#fff;font-weight:bold;letter-spacing:-0.22px;">KEBIJAKAAN</span>
<span class="t" style="left:107px;top:248.3px;font-size:3.2px;line-height:4.2px;color:#fff;font-weight:bold;letter-spacing:-0.08px;">TRENS &amp; ISU</span>
<span class="t" style="left:107px;top:252.5px;font-size:3.2px;line-height:4.2px;color:#fff;font-weight:bold;letter-spacing:-0.14px;">KEPERAWATAN</span>
<span class="t" style="left:107px;top:256.7px;font-size:3.2px;line-height:4.2px;color:#fff;font-weight:bold;letter-spacing:-0.13px;">PALIATIF</span>
<svg class="a" style="left:102.8px;top:261px" width="30.5" height="24.3" viewBox="0 0 214 170.5" preserveAspectRatio="none"><defs><clipPath id="qc"><rect width="214" height="170.5"/></clipPath><linearGradient id="ql" x1="0" y1="0" x2="0" y2="1"><stop offset="0" stop-color="#93b544"/><stop offset=".35" stop-color="#b3c744"/><stop offset="1" stop-color="#bccb4a"/></linearGradient><linearGradient id="qk" x1="0" y1="0" x2="0" y2="1"><stop offset="0" stop-color="#547f55"/><stop offset="1" stop-color="#86ad4a"/></linearGradient></defs><g clip-path="url(#qc)"><rect width="214" height="170.5" fill="#2c3f63"/><path d="M20 10h60l10 30-20 20h-50z M100 5h40l5 55h-50z" fill="#34496f"/><path d="M0 58h214v12h-214z" fill="#2f4a5e"/><rect y="68" width="214" height="22" fill="url(#qk)"/><rect y="88" width="214" height="83" fill="url(#ql)"/><path d="M92 96c2-14 8-18 12-12 3-8 10-8 13 0 4-8 12-7 14 1 5-9 14-8 17 0 4-8 12-7 15 1 5-8 13-6 15 2 4-6 11-4 12 3 4-3 8 0 8 5z" fill="#a6c94b"/><path d="M100 98h60c8 0 10 6 0 6h-40c-10 2-20 2-28-1z" fill="#cdb678" opacity=".8"/><path d="M104 116c30-6 60-2 110-8v20c-40 4-70 0-110 2z" fill="#84a035" opacity=".85"/><path d="M112 0h102v56c-6 4-10-4-16-2-6 6-12-2-18 2-6 4-10-4-14-2-4 4-10 0-12-8-6 0-10-6-8-12-8-2-12-10-10-16-8-4-14-10-24-18z" fill="#4e6c1f"/><path d="M150 0h64v38c-8 4-14-2-20-4-8 0-14-6-16-14-8-2-18-10-28-20z" fill="#33491a"/><circle cx="120" cy="6" r="7" fill="#a9cc2e"/><circle cx="130" cy="14" r="8" fill="#b4d435"/><circle cx="126" cy="24" r="6" fill="#9ec22c"/><circle cx="138" cy="26" r="7" fill="#b4d435"/><circle cx="134" cy="38" r="6" fill="#a4c82c"/><circle cx="144" cy="44" r="6" fill="#b4d435"/><circle cx="150" cy="34" r="5" fill="#8fb52a"/><circle cx="156" cy="50" r="5" fill="#a9cc2e"/><circle cx="166" cy="46" r="5" fill="#9ec22c"/><circle cx="176" cy="52" r="5" fill="#a9cc2e"/><circle cx="186" cy="48" r="4" fill="#8fb52a"/><circle cx="196" cy="52" r="4" fill="#a4c82c"/><circle cx="146" cy="12" r="6" fill="#9ec22c"/><circle cx="160" cy="22" r="6" fill="#a9cc2e"/><circle cx="172" cy="32" r="5" fill="#8fb52a"/><circle cx="184" cy="36" r="4" fill="#9ec22c"/><circle cx="198" cy="30" r="5" fill="#7da226"/><circle cx="206" cy="16" r="4" fill="#7da226"/><circle cx="168" cy="10" r="4" fill="#7da226"/><path d="M48 0h44c2 8-2 14-6 16 0 8-6 12-12 8-6 2-10-2-10-8-8 0-12-8-16-16z" fill="#8fb52a"/><circle cx="62" cy="6" r="5" fill="#b4d435"/><circle cx="74" cy="14" r="6" fill="#b4d435"/><circle cx="84" cy="6" r="5" fill="#a4c82c"/><circle cx="72" cy="3" r="4" fill="#4e6c1f"/><circle cx="80" cy="20" r="3" fill="#4e6c1f"/><path d="M202 48c4 0 8 0 12 2v66c-6 2-14 2-20-2 6-10 8-30 8-66z" fill="#35271d"/><path d="M186 118c8-6 20-6 28-2v8c-10 2-20 0-28-6z" fill="#4b3a25"/><path d="M0 0v170.5h152c-24-2-40-6-52-14-10-8-26-4-40-6-14-2-22-12-22-24 0-14-8-24-16-32-10-10-16-22-10-34 6-10 14-14 14-24 0-12-10-16-26-26z" fill="#fff"/><path d="M6 72c4 10 14 14 22 20 8 8 10 18 6 28-2 6-6 10-8 14 0-10-2-18-8-24-8-8-14-20-12-38z" fill="#a3bf3c"/><path d="M20 148c10-6 30-4 44 0 4 4-4 8-14 8-14 2-30-2-30-8z" fill="#a9c23b"/><ellipse cx="57.5" cy="52.5" rx="5.2" ry="6.8" fill="#cdb7a5"/><path d="M52 52c-1-8 10-10 11.5-2-3-2-7-2-8.5 2z" fill="#9b948f"/><path d="M51 59c6-3 12-1 14 4 4 13 5 28 7 42l-4 1c-4 2-13 2-24 0 2-15 2-33 7-47z" fill="#c9c9cd"/><path d="M47 106c8 2 16 2 21 0 2 14 3 30 3 46h-6c-2-10-4-20-5-30-4 10-10 20-17 28l-5-5c6-12 10-24 9-39z" fill="#a99372"/><path d="M35 143c2 4 6 8 9 10l-1 4c-5-2-9-6-10-11z M63 152h10c3 1 4 4 0 5h-10z" fill="#f2f2f2"/><path d="M70 92c2-8 12-8 13 0 0 6-2 10-3 14l-2 14h-10c-2-10-2-20 2-28z" fill="#25211f"/><path d="M86 99c3-4 10-4 12 1-2 3-6 4-12-1z" fill="#6b4a3a"/><path d="M90 103l5-1 3 8-8 1z" fill="#e3a53a"/><path d="M78 106h10l3 8h12l6 22-8 2-6-16h-14z" fill="#2aa59c"/><path d="M80 111h22v2.5h-22z" fill="#22262a"/><circle cx="82" cy="137" r="16.5" fill="none" stroke="#262a2e" stroke-width="2.6"/><circle cx="82" cy="137" r="12.5" fill="#dfe2e2"/><path d="M82 124.5v25 M69.5 137h25 M73 128l18 18 M91 128l-18 18" stroke="#9aa0a0" stroke-width=".7"/><circle cx="82" cy="137" r="13" fill="none" stroke="#8a9090" stroke-width="1"/><circle cx="82" cy="137" r="2.5" fill="#444"/><circle cx="99" cy="151" r="4.5" fill="#999" stroke="#555" stroke-width="1.5"/><path d="M104 126l8 22h5" stroke="#555" stroke-width="1.5" fill="none"/><rect x="106" y="146" width="7" height="2.5" fill="#222"/><path d="M134 136v14.5l3.3-3 2.3 5 2.2-1-2.3-5h4.5z" fill="#fff" stroke="#222" stroke-width=".9"/><text x="3.5" y="166" font-family="Liberation Sans,sans-serif" font-weight="bold" font-size="8" fill="#222" textLength="16" lengthAdjust="spacingAndGlyphs">iMAOS</text><text x="187" y="166.5" font-family="Liberation Sans,sans-serif" font-size="4.2" font-weight="bold" fill="#fff">www.imaos.id</text></g></svg>
<div class="a" style="left:102.8px;top:285.2px;width:30.5px;height:5.8px;background:#47525a;"></div>
<span class="t" style="left:110px;top:285.9px;font-size:2.2px;line-height:2.9px;color:#cfd6da;letter-spacing:-0.32px;">TIM PALIATIF RSMS</span>
<span class="t" style="left:15px;top:231.9px;font-size:12.5px;line-height:16.2px;color:#d5583b;">1</span>
<div class="a" style="left:33.5px;top:312.2px;width:104.3px;height:58.7px;background:#fff;border:.8px solid #d0d0d0"></div>
<div class="a" style="left:38px;top:316.2px;width:31px;height:0.8px;background:#555;"></div>
<div class="a" style="left:70px;top:316.2px;width:30px;height:0.8px;background:#8cc4ea;"></div>
<div class="a" style="left:102px;top:316.2px;width:31px;height:0.8px;background:#999;"></div>
<span class="t" style="left:15px;top:307.9px;font-size:12.5px;line-height:16.2px;color:#444;">2</span>
<div class="a" style="left:52px;top:323.2px;width:67.5px;height:14px;background:#74b5e3;border-radius:2px"></div>
<span class="t" style="left:54px;top:327.6px;font-size:4.5px;line-height:5.9px;color:#fff;font-weight:bold;letter-spacing:0.1px;">SEMANGAT PAGIII........</span>
<div class="a" style="left:52px;top:340.7px;width:67.5px;height:10px;background:#74b5e3;border-radius:2px"></div>
<span class="t" style="left:54px;top:343.6px;font-size:4.5px;line-height:5.9px;color:#fff;font-weight:bold;letter-spacing:0.05px;">PAGI PAGI YESS.....!!</span>
<svg class="a" style="left:52px;top:352.2px;" width="68" height="16" viewBox="0 0 68 16" fill="none"><rect x="28" y="0" width="39" height="14.5" fill="#fbfbfb"/><circle cx="12" cy="9" r="5.5" fill="#f6c81e"/><ellipse cx="7" cy="3" rx="5" ry="2.5" fill="#fff" stroke="#d44" stroke-width=".7"/><path d="M18 8c1-5 5-6 6-2l-2 5z" fill="#fff" stroke="#777" stroke-width=".5"/><circle cx="48" cy="9.5" r="5.5" fill="#f6c81e"/><path d="M43 7c3 2 7 2 10 0" stroke="#a36a10" stroke-width=".8"/><path d="M52 12c3 1 5 0 6-2" stroke="#e2a91a" stroke-width="1.5"/></svg>
<span class="t" style="left:97px;top:352.1px;font-size:4px;line-height:5.2px;color:#333;font-weight:bold;font-style:italic;letter-spacing:0.08px;">Hai !</span>
<div class="a" style="left:33.5px;top:387px;width:104.3px;height:58.7px;background:#fff;border:.8px solid #d0d0d0"></div>
<span class="t" style="left:15px;top:383.4px;font-size:12.5px;line-height:16.2px;color:#444;">3</span>
<div class="a" style="left:38px;top:391.5px;width:9px;height:0.8px;background:#555;"></div>
<div class="a" style="left:124px;top:391.5px;width:9px;height:0.8px;background:#999;"></div>
<div class="a" style="left:47px;top:387.5px;width:15.5px;height:7.5px;background:#74b5e3;"></div>
<div class="a" style="left:62.5px;top:387.5px;width:62px;height:7.5px;background:#fdc010;"></div>
<svg class="a" style="left:49px;top:388.5px;" width="9" height="6.5" viewBox="0 0 9 6.5" fill="none"><path d="M1 6c0-3 2-5 4-5s3 2 3 5z" fill="#b5482a"/></svg>
<span class="t" style="left:67px;top:391.2px;font-size:2.8px;line-height:3.6px;color:#6a3b00;font-weight:bold;letter-spacing:-0.42px;">PENGKAJIAN KEPERAWATAN PALIATIF</span>
<svg class="a" style="left:41px;top:400.5px;" width="43.5" height="30.5" viewBox="0 0 43.5 30.5" fill="none"><defs><linearGradient id="sk" x1="0" y1="0" x2="0" y2="1"><stop offset="0" stop-color="#a9c1d9"/><stop offset=".45" stop-color="#d3dbe0"/><stop offset=".55" stop-color="#9db1b3"/><stop offset="1" stop-color="#8b8a86"/></linearGradient></defs><rect width="43.5" height="30.5" fill="url(#sk)"/><path d="M0 22c10-3 30-3 43.5-1v9.5h-43.5z" fill="#8e8c88"/><path d="M29 24c1-5 2-9 4-9s3 4 4 9z" fill="#5e5a57"/><path d="M5 6c6-2 14-2 20 0 M22 4c6-2 12-1 18 1" stroke="#eef2f5" stroke-width="1.5"/></svg>
<span class="t" style="left:93.5px;top:401.3px;font-size:2.6px;line-height:3.4px;color:#223a7a;font-weight:bold;letter-spacing:-0.37px;">Lingkungan Budaya</span>
<span class="t" style="left:100px;top:405.2px;font-size:2px;line-height:2.6px;color:#666;letter-spacing:-0.28px;">Support Sistem</span>
<span class="t" style="left:94.5px;top:407.7px;font-size:2px;line-height:2.6px;color:#666;letter-spacing:-0.06px;">Nilai &amp; Kepercayaan</span>
<span class="t" style="left:94px;top:422.6px;font-size:2.2px;line-height:2.9px;color:#222;font-weight:bold;letter-spacing:-0.27px;">Komunikasi</span>
<span class="t" style="left:94px;top:425.6px;font-size:2.2px;line-height:2.9px;color:#222;font-weight:bold;letter-spacing:-0.38px;">Keluarga dan lainnya</span>
<div class="a" style="left:33.5px;top:462.3px;width:104.3px;height:58.7px;background:#fff;border:.8px solid #d0d0d0"></div>
<div class="a" style="left:38px;top:466.3px;width:31px;height:0.8px;background:#555;"></div>
<div class="a" style="left:70px;top:466.3px;width:30px;height:0.8px;background:#8cc4ea;"></div>
<div class="a" style="left:102px;top:466.3px;width:31px;height:0.8px;background:#999;"></div>
<span class="t" style="left:15px;top:458.4px;font-size:12.5px;line-height:16.2px;color:#444;">4</span>
<span class="t" style="left:14px;top:473.1px;font-size:9px;line-height:11.7px;color:#555;">★</span>
<span class="t" style="left:77px;top:468.5px;font-size:2.8px;line-height:3.6px;color:#333;font-weight:bold;">APERSEPSI</span>
<svg class="a" style="left:55px;top:473.3px;" width="65" height="43" viewBox="0 0 65 43" fill="none"><rect x="0" y=".5" width="26" height="19.5" fill="#cdbcae"/><path d="M6 20c0-8 2-13 5-13s4 5 4 13z" fill="#efe9e6"/><path d="M14 20c0-7 2-11 4-11s4 4 4 11z" fill="#e3b6b4"/><rect x="1" y="1" width="5" height="19" fill="#b19a8a"/><rect x="31" y=".5" width="32" height="19.5" fill="#d9cfc4"/><path d="M31 .5h12c3 5 2 12-4 15l-8-3z" fill="#2f4e9f"/><path d="M47 10c4-3 11-2 13 4l-2 6h-14z" fill="#35a9b8"/><circle cx="52" cy="8" r="3.5" fill="#e8c1a5"/><path d="M38 13l9 3-1 3-10-3z" fill="#f1f1f1"/><rect x="1" y="24" width="26" height="18" fill="#7ea12f"/><path d="M1 24h26v7c-8 2-18 2-26 0z" fill="#31456a"/><path d="M1 24c5 3 6 9 3 18h-3z" fill="#fff"/><path d="M8 40c1-6 2-9 3-9s2 4 2 9z" fill="#ddd"/><circle cx="14" cy="38" r="2.5" fill="none" stroke="#333" stroke-width=".7"/><rect x="31" y="24" width="32" height="18" fill="#e7c6c2"/><path d="M31 33c8-5 20-6 32-3v12h-32z" fill="#d8989a"/><path d="M38 31c5-2 12-2 16 2l-6 6-10-3z" fill="#f0d2c8"/><path d="M31 24h32v5c-10-2-22-1-32 3z" fill="#f3e7e6"/></svg>
<div class="a" style="left:33.5px;top:538.2px;width:104.3px;height:58.7px;background:#fff;border:.8px solid #d0d0d0"></div>
<span class="t" style="left:15px;top:533.9px;font-size:12.5px;line-height:16.2px;color:#444;">5</span>
<div class="a" style="left:38px;top:542.2px;width:95px;height:0.8px;background:#888;"></div>
<span class="t" style="left:61px;top:542.4px;font-size:4.8px;line-height:6.2px;color:#111;font-weight:bold;letter-spacing:-0.38px;">TUJUAN INSTRUKSIONAL</span>
<span class="t" style="left:54.5px;top:560.2px;font-size:2.8px;line-height:3.6px;color:#111;font-weight:bold;letter-spacing:-0.32px;">Memiliki mengikuti mencakup, peserta</span>
<span class="t" style="left:54.5px;top:564.7px;font-size:2.8px;line-height:3.6px;color:#111;font-weight:bold;letter-spacing:0.04px;">memahami kebijakan tren, dan isu perawatan</span>
<span class="t" style="left:54.5px;top:568.9px;font-size:2.8px;line-height:3.6px;color:#111;font-weight:bold;">paliatif</span>
<div class="a" style="left:52px;top:561.5px;width:1px;height:1px;background:#333;"></div>
<div class="a" style="left:33.5px;top:613.1px;width:104.3px;height:38.4px;background:#fff;border:.8px solid #d0d0d0;border-bottom:none"></div>
<div class="a" style="left:38px;top:617.1px;width:31px;height:0.8px;background:#555;"></div>
<div class="a" style="left:70px;top:617.1px;width:30px;height:0.8px;background:#8cc4ea;"></div>
<div class="a" style="left:102px;top:617.1px;width:31px;height:0.8px;background:#999;"></div>
<span class="t" style="left:15px;top:609.4px;font-size:12.5px;line-height:16.2px;color:#444;">6</span>
<svg class="a" style="left:52px;top:622.1px;" width="72" height="29" viewBox="0 0 72 29" fill="none"><defs><linearGradient id="rb" x1="0" y1="0" x2="1" y2="0"><stop offset="0" stop-color="#e0452b"/><stop offset=".3" stop-color="#f0b11a"/><stop offset=".6" stop-color="#4fae46"/><stop offset="1" stop-color="#2f7ec2"/></linearGradient></defs><path d="M3 5c8-4 20-4 29 0-9-1.5-20-1.5-29 0z" fill="url(#rb)" stroke="url(#rb)" stroke-width="1"/><rect x="39" y="5" width="31" height="24" fill="#c2cdf3"/><rect x="38" y="4" width="33" height="25" fill="#aab8ee" opacity=".5"/><path d="M42 10h24 M42 13h24 M42 16h20 M42 19h24 M42 22h22 M42 25h24" stroke="#8fa2e0" stroke-width=".7"/><path d="M-2 16h38 M6 19h24 M0 23h36 M8 26h20" stroke="#777" stroke-width=".9" stroke-dasharray="5 .8 3 .6"/></svg>
<!-- slide -->
<div class="a" style="left:257px;top:234.5px;width:723.7px;height:407px;background:#fff;"></div>
<div class="a" style="left:980.6px;top:234.5px;width:1px;height:407px;background:#c9c9c9;"></div>
<div class="a" style="left:278.5px;top:257.5px;width:436.5px;height:354.5px;background:#fff;border:1.3px solid #2a2a2a"></div>
<svg class="a" style="left:279px;top:258px" width="436" height="354" viewBox="279 258 436 354" font-family="Liberation Sans,sans-serif" font-weight="bold" font-style="italic" stroke-linejoin="round"><text y="416" font-weight="normal" fill="#34608f" stroke="#34608f" stroke-linecap="round"><tspan x="347" font-size="104" textLength="61" lengthAdjust="spacingAndGlyphs" stroke-width="1">P</tspan><tspan x="402" font-size="80" textLength="41" lengthAdjust="spacingAndGlyphs" stroke-width="3.2">a</tspan><tspan x="443" font-size="116" textLength="22" lengthAdjust="spacingAndGlyphs" stroke-width="1">l</tspan><tspan x="466" font-size="116" textLength="22" lengthAdjust="spacingAndGlyphs" stroke-width="1">l</tspan><tspan x="489" font-size="80" textLength="16" lengthAdjust="spacingAndGlyphs" stroke-width="3.2">i</tspan><tspan x="507" font-size="80" textLength="41" lengthAdjust="spacingAndGlyphs" stroke-width="3.2">a</tspan><tspan x="548" font-size="103" textLength="22" lengthAdjust="spacingAndGlyphs" stroke-width="1">t</tspan><tspan x="571" font-size="80" textLength="16" lengthAdjust="spacingAndGlyphs" stroke-width="3.2">i</tspan><tspan x="588" font-size="80" textLength="31" lengthAdjust="spacingAndGlyphs" stroke-width="3.2">v</tspan><tspan x="620" font-size="80" textLength="30" lengthAdjust="spacingAndGlyphs" stroke-width="3.2">e</tspan></text><text y="495" font-weight="normal" fill="#6ba5cf" stroke="#6ba5cf" stroke-linecap="round"><tspan x="421" font-size="108" textLength="57" lengthAdjust="spacingAndGlyphs" stroke-width="4">C</tspan><tspan x="476" font-size="72" textLength="36" lengthAdjust="spacingAndGlyphs" stroke-width="4.5">a</tspan><tspan x="514" font-size="72" textLength="26" lengthAdjust="spacingAndGlyphs" stroke-width="4.5">r</tspan><tspan x="541" font-size="72" textLength="33" lengthAdjust="spacingAndGlyphs" stroke-width="4.5">e</tspan></text><text x="406" y="268.3" font-size="8.5" textLength="25" lengthAdjust="spacingAndGlyphs" fill="#2e4e8c" stroke="#2e4e8c" stroke-width="0.25">prepare</text><text x="410" y="280" font-size="7.8" textLength="49" lengthAdjust="spacingAndGlyphs" fill="#74add6" stroke="#74add6" stroke-width="0.25">decision-making</text><text x="385" y="284" font-size="7.7" textLength="25" lengthAdjust="spacingAndGlyphs" fill="#74add6" stroke="#74add6" stroke-width="0.25">complex</text><text x="367" y="299" font-size="16.3" textLength="102" lengthAdjust="spacingAndGlyphs" fill="#2f5f8f" stroke="#2f5f8f" stroke-width="0.36">person-centered</text><text x="440" y="310" font-size="8.5" textLength="46" lengthAdjust="spacingAndGlyphs" fill="#2b4a7e" stroke="#2b4a7e" stroke-width="0.25">illness-related</text><text x="367.7" y="317.3" font-size="8.1" textLength="27.7" lengthAdjust="spacingAndGlyphs" fill="#3f77a8" stroke="#3f77a8" stroke-width="0.25">informed</text><text x="423.7" y="317.3" font-size="7.4" textLength="30.3" lengthAdjust="spacingAndGlyphs" fill="#1e2a66" stroke="#1e2a66" stroke-width="0.25">continuum</text><text x="346.6" y="337" font-size="30" textLength="100" lengthAdjust="spacingAndGlyphs" fill="#2e4e8c" stroke="#2e4e8c" stroke-width="0.66">goodbye</text><text x="458" y="330" font-size="32.9" textLength="98" lengthAdjust="spacingAndGlyphs" fill="#6ba5cf" stroke="#6ba5cf" stroke-width="0.72">comfort</text><text x="415" y="359.5" font-size="8.3" textLength="21.4" lengthAdjust="spacingAndGlyphs" fill="#1e2a66" stroke="#1e2a66" stroke-width="0.25">variety</text><text x="491.7" y="347.5" font-size="7.8" textLength="45.9" lengthAdjust="spacingAndGlyphs" fill="#1e2a66" stroke="#1e2a66" stroke-width="0.25">responsibilities</text><text x="502.8" y="369" font-size="17" textLength="19.6" lengthAdjust="spacingAndGlyphs" fill="#1e2a66" stroke="#1e2a66" stroke-width="0.37">life</text><text x="539.6" y="276.5" font-size="8" textLength="30.4" lengthAdjust="spacingAndGlyphs" fill="#3d5fa0" stroke="#3d5fa0" stroke-width="0.25">emotional</text><text x="528" y="289" font-size="17" textLength="74.7" lengthAdjust="spacingAndGlyphs" fill="#1f3a8a" stroke="#1f3a8a" stroke-width="0.37">preparation</text><text x="520" y="306" font-size="7.8" textLength="23" lengthAdjust="spacingAndGlyphs" fill="#1e2a66" stroke="#1e2a66" stroke-width="0.25">nursing</text><text x="593" y="317" font-size="7.7" textLength="29.6" lengthAdjust="spacingAndGlyphs" fill="#74add6" stroke="#74add6" stroke-width="0.25">autonomy</text><text x="607" y="327.5" font-size="7.8" textLength="29" lengthAdjust="spacingAndGlyphs" fill="#1e2a66" stroke="#1e2a66" stroke-width="0.25">sympathy</text><text x="594" y="347.8" font-size="16.6" textLength="51" lengthAdjust="spacingAndGlyphs" fill="#74add6" stroke="#74add6" stroke-width="0.37">practice</text><text x="522" y="337.5" font-size="8" textLength="31" lengthAdjust="spacingAndGlyphs" fill="#2b4a8e" stroke="#2b4a8e" stroke-width="0.25">resolution</text><text x="520" y="355.5" font-size="8.2" textLength="24.5" lengthAdjust="spacingAndGlyphs" fill="#3d5fb0" stroke="#3d5fb0" stroke-width="0.25">support</text><text x="588.4" y="370" font-size="17.3" textLength="67" lengthAdjust="spacingAndGlyphs" fill="#1f3a8a" stroke="#1f3a8a" stroke-width="0.38">end-of-life</text><text x="374" y="410.5" font-size="8" textLength="21.4" lengthAdjust="spacingAndGlyphs" fill="#74add6" stroke="#74add6" stroke-width="0.25">friends</text><text x="372.6" y="423" font-size="7.8" textLength="27.4" lengthAdjust="spacingAndGlyphs" fill="#3a5a9a" stroke="#3a5a9a" stroke-width="0.25">celebrate</text><text x="412" y="425.5" font-size="7" textLength="25" lengthAdjust="spacingAndGlyphs" fill="#8fc0e0" stroke="#8fc0e0" stroke-width="0.25">concerns</text><text x="372" y="439.4" font-size="20.9" textLength="54.7" lengthAdjust="spacingAndGlyphs" fill="#1e2a66" stroke="#1e2a66" stroke-width="0.46">coping</text><text x="473.5" y="430.6" font-size="15" textLength="52.8" lengthAdjust="spacingAndGlyphs" fill="#1e2a66" stroke="#1e2a66" stroke-width="0.33">empower</text><text x="474.5" y="453" font-size="16.6" textLength="51.8" lengthAdjust="spacingAndGlyphs" fill="#1f3a8a" stroke="#1f3a8a" stroke-width="0.37">spiritual</text><text x="366" y="451" font-size="8.1" textLength="18.7" lengthAdjust="spacingAndGlyphs" fill="#74add6" stroke="#74add6" stroke-width="0.25">timely</text><text x="394" y="452" font-size="8.3" textLength="21.5" lengthAdjust="spacingAndGlyphs" fill="#1e2a66" stroke="#1e2a66" stroke-width="0.25">quality</text><text x="375.3" y="464" font-size="7.5" textLength="46.1" lengthAdjust="spacingAndGlyphs" fill="#1e2a66" stroke="#1e2a66" stroke-width="0.25">disease-specific</text><text x="388.6" y="475" font-size="7.1" textLength="33.2" lengthAdjust="spacingAndGlyphs" fill="#74add6" stroke="#74add6" stroke-width="0.25">competence</text><text x="530.7" y="453.3" font-size="31.5" textLength="88.1" lengthAdjust="spacingAndGlyphs" fill="#1f3a8a" stroke="#1f3a8a" stroke-width="0.69">holistic</text><text x="572" y="429.5" font-size="8.3" textLength="18" lengthAdjust="spacingAndGlyphs" fill="#4a6aa8" stroke="#4a6aa8" stroke-width="0.25">moral</text><text x="601.8" y="424" font-size="7.8" textLength="21.9" lengthAdjust="spacingAndGlyphs" fill="#1e2a66" stroke="#1e2a66" stroke-width="0.25">cardiac</text><text x="610.6" y="431.5" font-size="8.2" textLength="31.4" lengthAdjust="spacingAndGlyphs" fill="#2b4a9e" stroke="#2b4a9e" stroke-width="0.25">respectful</text><text x="575" y="465" font-size="7.4" textLength="43.8" lengthAdjust="spacingAndGlyphs" fill="#74add6" stroke="#74add6" stroke-width="0.25">communication</text><text x="448.7" y="485.5" font-size="8.6" textLength="16.9" lengthAdjust="spacingAndGlyphs" fill="#74add6" stroke="#74add6" stroke-width="0.25">heart</text><text x="448.7" y="523" font-size="38.6" textLength="116.7" lengthAdjust="spacingAndGlyphs" fill="#1a2260" stroke="#1a2260" stroke-width="0.85">passion</text><text x="547" y="533.5" font-size="7.3" textLength="14" lengthAdjust="spacingAndGlyphs" fill="#1e2a66" stroke="#1e2a66" stroke-width="0.25">learn</text><text x="501" y="545" font-size="16.1" textLength="48" lengthAdjust="spacingAndGlyphs" fill="#74add6" stroke="#74add6" stroke-width="0.35">families</text><text x="468.4" y="569.5" font-size="37.2" textLength="59.6" lengthAdjust="spacingAndGlyphs" fill="#34608f" stroke="#34608f" stroke-width="0.82">love</text><text x="476" y="580" font-size="7.7" textLength="38" lengthAdjust="spacingAndGlyphs" fill="#1f3a8a" stroke="#1f3a8a" stroke-width="0.25">management</text><text x="482.6" y="590.5" font-size="8.5" textLength="30.9" lengthAdjust="spacingAndGlyphs" fill="#2e5a8a" stroke="#2e5a8a" stroke-width="0.25">treatment</text><g transform="translate(561 291) rotate(90)"><text x="0" y="0" font-size="21" textLength="46" lengthAdjust="spacingAndGlyphs" fill="#1a2260" stroke="#1a2260" stroke-width="0.74">family</text></g><g transform="translate(577.5 291) rotate(90)"><text x="0" y="0" font-size="27" textLength="62" lengthAdjust="spacingAndGlyphs" fill="#33558f" stroke="#33558f" stroke-width="0.95">today</text></g><g transform="translate(406 358) rotate(41.5)"><text x="0" y="0" font-size="8.5" textLength="34.7" lengthAdjust="spacingAndGlyphs" fill="#74add6" stroke="#74add6" stroke-width="0.3">appreciate</text></g><g transform="translate(446 444) rotate(62.2)"><text x="0" y="0" font-size="17" textLength="40.7" lengthAdjust="spacingAndGlyphs" fill="#74add6" stroke="#74add6" stroke-width="0.6">dying</text></g><g transform="translate(471 480) rotate(-69.4)"><text x="0" y="0" font-size="7.5" textLength="17.1" lengthAdjust="spacingAndGlyphs" fill="#1e2a66" stroke="#1e2a66" stroke-width="0.3">need</text></g><g transform="translate(402 492) rotate(47.1)"><text x="0" y="0" font-size="18" textLength="57.3" lengthAdjust="spacingAndGlyphs" fill="#1f3a8a" stroke="#1f3a8a" stroke-width="0.63">training</text></g><g transform="translate(587 511) rotate(-73.3)"><text x="0" y="0" font-size="9" textLength="41.8" lengthAdjust="spacingAndGlyphs" fill="#74add6" stroke="#74add6" stroke-width="0.32">educational</text></g><g transform="translate(482 533) rotate(32)"><text x="0" y="0" font-size="8.5" textLength="18.9" lengthAdjust="spacingAndGlyphs" fill="#3d5a9a" stroke="#3d5a9a" stroke-width="0.3">death</text></g></svg>
<div class="a" style="left:739px;top:261.5px;width:214px;height:139px;background:#74b5e3;"></div>
<span class="t" style="left:769.6px;top:283.9px;font-size:22px;line-height:28.6px;color:#fff;font-weight:bold;letter-spacing:-1.2px;">KEBIJAKAAN</span>
<span class="t" style="left:769.6px;top:312.8px;font-size:22px;line-height:28.6px;color:#fff;font-weight:bold;letter-spacing:-0.4px;">TRENS &amp; ISU</span>
<span class="t" style="left:769.6px;top:341.7px;font-size:22px;line-height:28.6px;color:#fff;font-weight:bold;letter-spacing:-0.81px;">KEPERAWATAN</span>
<span class="t" style="left:769.6px;top:370.6px;font-size:22px;line-height:28.6px;color:#fff;font-weight:bold;letter-spacing:-0.52px;">PALIATIF</span>
<svg class="a" style="left:739px;top:400px" width="214" height="170.5" viewBox="0 0 214 170.5" preserveAspectRatio="none"><defs><clipPath id="pc"><rect width="214" height="170.5"/></clipPath><linearGradient id="pl" x1="0" y1="0" x2="0" y2="1"><stop offset="0" stop-color="#93b544"/><stop offset=".35" stop-color="#b3c744"/><stop offset="1" stop-color="#bccb4a"/></linearGradient><linearGradient id="pk" x1="0" y1="0" x2="0" y2="1"><stop offset="0" stop-color="#547f55"/><stop offset="1" stop-color="#86ad4a"/></linearGradient></defs><g clip-path="url(#pc)"><rect width="214" height="170.5" fill="#2c3f63"/><path d="M20 10h60l10 30-20 20h-50z M100 5h40l5 55h-50z" fill="#34496f"/><path d="M0 58h214v12h-214z" fill="#2f4a5e"/><rect y="68" width="214" height="22" fill="url(#pk)"/><rect y="88" width="214" height="83" fill="url(#pl)"/><path d="M92 96c2-14 8-18 12-12 3-8 10-8 13 0 4-8 12-7 14 1 5-9 14-8 17 0 4-8 12-7 15 1 5-8 13-6 15 2 4-6 11-4 12 3 4-3 8 0 8 5z" fill="#a6c94b"/><path d="M100 98h60c8 0 10 6 0 6h-40c-10 2-20 2-28-1z" fill="#cdb678" opacity=".8"/><path d="M104 116c30-6 60-2 110-8v20c-40 4-70 0-110 2z" fill="#84a035" opacity=".85"/><path d="M112 0h102v56c-6 4-10-4-16-2-6 6-12-2-18 2-6 4-10-4-14-2-4 4-10 0-12-8-6 0-10-6-8-12-8-2-12-10-10-16-8-4-14-10-24-18z" fill="#4e6c1f"/><path d="M150 0h64v38c-8 4-14-2-20-4-8 0-14-6-16-14-8-2-18-10-28-20z" fill="#33491a"/><circle cx="120" cy="6" r="7" fill="#a9cc2e"/><circle cx="130" cy="14" r="8" fill="#b4d435"/><circle cx="126" cy="24" r="6" fill="#9ec22c"/><circle cx="138" cy="26" r="7" fill="#b4d435"/><circle cx="134" cy="38" r="6" fill="#a4c82c"/><circle cx="144" cy="44" r="6" fill="#b4d435"/><circle cx="150" cy="34" r="5" fill="#8fb52a"/><circle cx="156" cy="50" r="5" fill="#a9cc2e"/><circle cx="166" cy="46" r="5" fill="#9ec22c"/><circle cx="176" cy="52" r="5" fill="#a9cc2e"/><circle cx="186" cy="48" r="4" fill="#8fb52a"/><circle cx="196" cy="52" r="4" fill="#a4c82c"/><circle cx="146" cy="12" r="6" fill="#9ec22c"/><circle cx="160" cy="22" r="6" fill="#a9cc2e"/><circle cx="172" cy="32" r="5" fill="#8fb52a"/><circle cx="184" cy="36" r="4" fill="#9ec22c"/><circle cx="198" cy="30" r="5" fill="#7da226"/><circle cx="206" cy="16" r="4" fill="#7da226"/><circle cx="168" cy="10" r="4" fill="#7da226"/><path d="M48 0h44c2 8-2 14-6 16 0 8-6 12-12 8-6 2-10-2-10-8-8 0-12-8-16-16z" fill="#8fb52a"/><circle cx="62" cy="6" r="5" fill="#b4d435"/><circle cx="74" cy="14" r="6" fill="#b4d435"/><circle cx="84" cy="6" r="5" fill="#a4c82c"/><circle cx="72" cy="3" r="4" fill="#4e6c1f"/><circle cx="80" cy="20" r="3" fill="#4e6c1f"/><path d="M202 48c4 0 8 0 12 2v66c-6 2-14 2-20-2 6-10 8-30 8-66z" fill="#35271d"/><path d="M186 118c8-6 20-6 28-2v8c-10 2-20 0-28-6z" fill="#4b3a25"/><path d="M0 0v170.5h152c-24-2-40-6-52-14-10-8-26-4-40-6-14-2-22-12-22-24 0-14-8-24-16-32-10-10-16-22-10-34 6-10 14-14 14-24 0-12-10-16-26-26z" fill="#fff"/><path d="M6 72c4 10 14 14 22 20 8 8 10 18 6 28-2 6-6 10-8 14 0-10-2-18-8-24-8-8-14-20-12-38z" fill="#a3bf3c"/><path d="M20 148c10-6 30-4 44 0 4 4-4 8-14 8-14 2-30-2-30-8z" fill="#a9c23b"/><ellipse cx="57.5" cy="52.5" rx="5.2" ry="6.8" fill="#cdb7a5"/><path d="M52 52c-1-8 10-10 11.5-2-3-2-7-2-8.5 2z" fill="#9b948f"/><path d="M51 59c6-3 12-1 14 4 4 13 5 28 7 42l-4 1c-4 2-13 2-24 0 2-15 2-33 7-47z" fill="#c9c9cd"/><path d="M47 106c8 2 16 2 21 0 2 14 3 30 3 46h-6c-2-10-4-20-5-30-4 10-10 20-17 28l-5-5c6-12 10-24 9-39z" fill="#a99372"/><path d="M35 143c2 4 6 8 9 10l-1 4c-5-2-9-6-10-11z M63 152h10c3 1 4 4 0 5h-10z" fill="#f2f2f2"/><path d="M70 92c2-8 12-8 13 0 0 6-2 10-3 14l-2 14h-10c-2-10-2-20 2-28z" fill="#25211f"/><path d="M86 99c3-4 10-4 12 1-2 3-6 4-12-1z" fill="#6b4a3a"/><path d="M90 103l5-1 3 8-8 1z" fill="#e3a53a"/><path d="M78 106h10l3 8h12l6 22-8 2-6-16h-14z" fill="#2aa59c"/><path d="M80 111h22v2.5h-22z" fill="#22262a"/><circle cx="82" cy="137" r="16.5" fill="none" stroke="#262a2e" stroke-width="2.6"/><circle cx="82" cy="137" r="12.5" fill="#dfe2e2"/><path d="M82 124.5v25 M69.5 137h25 M73 128l18 18 M91 128l-18 18" stroke="#9aa0a0" stroke-width=".7"/><circle cx="82" cy="137" r="13" fill="none" stroke="#8a9090" stroke-width="1"/><circle cx="82" cy="137" r="2.5" fill="#444"/><circle cx="99" cy="151" r="4.5" fill="#999" stroke="#555" stroke-width="1.5"/><path d="M104 126l8 22h5" stroke="#555" stroke-width="1.5" fill="none"/><rect x="106" y="146" width="7" height="2.5" fill="#222"/><path d="M134 136v14.5l3.3-3 2.3 5 2.2-1-2.3-5h4.5z" fill="#fff" stroke="#222" stroke-width=".9"/><text x="3.5" y="166" font-family="Liberation Sans,sans-serif" font-weight="bold" font-size="8" fill="#222" textLength="16" lengthAdjust="spacingAndGlyphs">iMAOS</text><text x="187" y="166.5" font-family="Liberation Sans,sans-serif" font-size="4.2" font-weight="bold" fill="#fff">www.imaos.id</text></g></svg>
<div class="a" style="left:739px;top:570.2px;width:214px;height:41.6px;background:#47525a;"></div>
<span class="t" style="left:786px;top:576.9px;font-size:13px;line-height:16.9px;color:#dfe4e7;letter-spacing:-0.74px;">TIM PALIATIF RSMS</span>
<!-- status -->
<div class="a" style="left:6px;top:652.5px;width:1073px;height:17.5px;background:#f3f3f3;"></div>
<div class="a" style="left:6px;top:651.5px;width:1073px;height:1px;background:#d6d6d6;"></div>
<span class="t" style="left:12.5px;top:655.6px;font-size:9.5px;line-height:12.3px;color:#444;letter-spacing:-0.28px;">Slide 1 of 38</span>
<svg class="a" style="left:77px;top:656px;" width="12" height="11" viewBox="0 0 12 11" fill="none"><path d="M.5 1.5h4.5v8h-4.5z M5 1.5h3v3 M5 9.5h4v-2" stroke="#666" stroke-width=".9"/><path d="M10.5 1l-4 4.5-.5 1.5 1.5-.5 4-4.5z" fill="#666"/></svg>
<span class="t" style="left:101px;top:655.6px;font-size:9.5px;line-height:12.3px;color:#444;letter-spacing:-0.24px;">English (Indonesia)</span>
<svg class="a" style="left:190px;top:655.5px;" width="13" height="13" viewBox="0 0 13 13" fill="none"><circle cx="4.5" cy="2" r="1.3" fill="#555"/><path d="M1 4.5h7 M4.5 4.5v3.5 M4.5 8l-2.5 4 M4.5 8l2 2.5" stroke="#555" stroke-width="1"/><path d="M7.5 7.5l4 4 M11.5 7.5l-4 4" stroke="#555" stroke-width="1.1"/></svg>
<span class="t" style="left:205px;top:655.6px;font-size:9.5px;line-height:12.3px;color:#444;letter-spacing:-0.24px;">Accessibility: Investigate</span>
<svg class="a" style="left:676px;top:656px;" width="10" height="11" viewBox="0 0 10 11" fill="none"><path d="M4.5 .5l2 2.5h-4z" fill="#666"/><path d="M.5 5h8 M.5 7.5h8 M.5 10h5" stroke="#666" stroke-width="1"/></svg>
<span class="t" style="left:688px;top:655.6px;font-size:9.5px;line-height:12.3px;color:#444;letter-spacing:-0.45px;">Notes</span>
<svg class="a" style="left:727px;top:656px;" width="12" height="11" viewBox="0 0 12 11" fill="none"><path d="M1 .5h10v7h-6l-2.5 2.5v-2.5h-1.5z" fill="#555"/></svg>
<span class="t" style="left:740.5px;top:655.6px;font-size:9.5px;line-height:12.3px;color:#444;letter-spacing:-0.56px;">Comments</span>
<div class="a" style="left:798px;top:652.5px;width:31px;height:17.5px;background:#cfcfcf;"></div>
<svg class="a" style="left:808px;top:656px;" width="12" height="11" viewBox="0 0 12 11" fill="none"><rect x=".5" y=".5" width="10.5" height="9.5" stroke="#666"/><rect x="2.5" y="2.5" width="6.5" height="3.5" stroke="#666" stroke-width=".8"/><path d="M.5 8h10.5" stroke="#666" stroke-width=".8"/></svg>
<svg class="a" style="left:839px;top:656px;" width="12" height="11" viewBox="0 0 12 11" fill="none"><rect x=".5" y=".5" width="4" height="3.5" stroke="#666" stroke-width=".9"/><rect x="7" y=".5" width="4" height="3.5" stroke="#666" stroke-width=".9"/><rect x=".5" y="6.5" width="4" height="3.5" stroke="#666" stroke-width=".9"/><rect x="7" y="6.5" width="4" height="3.5" stroke="#666" stroke-width=".9"/></svg>
<svg class="a" style="left:871px;top:656px;" width="11" height="11" viewBox="0 0 11 11" fill="none"><path d="M.5 1h4.5v9h-4.5z M5.5 1h4.5v9h-4.5z" stroke="#666" stroke-width=".9"/><path d="M1.5 3h2.5 M1.5 5h2.5 M1.5 7h2.5 M6.5 3h2.5 M6.5 5h2.5 M6.5 7h2.5" stroke="#888" stroke-width=".7"/></svg>
<svg class="a" style="left:901px;top:656px;" width="12" height="11" viewBox="0 0 12 11" fill="none"><path d="M.5 1h11 M1.5 1v5.5h9v-5.5 M6 6.5v3 M3.5 10h5" stroke="#666" stroke-width="1"/></svg>
<div class="a" style="left:928px;top:661px;width:6px;height:1px;background:#777;"></div>
<div class="a" style="left:939px;top:661px;width:77px;height:1px;background:#8a8a8a;"></div>
<div class="a" style="left:977px;top:659px;width:1px;height:5px;background:#8a8a8a;"></div>
<div class="a" style="left:964.5px;top:656.5px;width:3px;height:10px;background:#444;"></div>
<div class="a" style="left:1020px;top:661px;width:6px;height:1px;background:#777;"></div>
<div class="a" style="left:1022.5px;top:658.5px;width:1px;height:6px;background:#777;"></div>
<span class="t" style="left:1036.8px;top:655.6px;font-size:9.5px;line-height:12.3px;color:#444;letter-spacing:-1.51px;">72%</span>
<svg class="a" style="left:1063px;top:655.5px;" width="13" height="12" viewBox="0 0 13 12" fill="none"><rect x=".5" y=".5" width="11.5" height="10.5" stroke="#555" stroke-width=".9"/><path d="M6.2 2.5v6.5 M3 5.7h6.5 M6.2 2.5l-1 1 M6.2 2.5l1 1 M6.2 9l-1-1 M6.2 9l1-1 M3 5.7l1-1 M3 5.7l1 1 M9.5 5.7l-1-1 M9.5 5.7l-1 1" stroke="#555" stroke-width=".8"/></svg>
<!-- participants -->
<div class="a" style="left:1148px;top:99px;width:160px;height:90px;background:#232323;"></div>
<span class="t" style="left:1168.5px;top:134.8px;font-size:15px;line-height:19.5px;color:#fff;font-weight:bold;letter-spacing:-0.27px;word-spacing:3px;">3C_Brayen Nur...</span>
<div class="a" style="left:1148px;top:169.5px;width:160px;height:19.5px;background:#2e2e2e;"></div>
<svg class="a" style="left:1150px;top:171px;" width="16" height="16" viewBox="0 0 16 16" fill="none"><path d="M8 1.8a3 3 0 0 1 3 3v4.2a3 3 0 0 1-1.3 2.5l-.5 .5h-2.4l-.5-.5a3 3 0 0 1-1.3-2.5v-4.2a3 3 0 0 1 3-3z" fill="#f0555a"/><rect x="5.3" y="12.8" width="5.7" height="1.3" fill="#f0555a"/><path d="M1.4 14.7l13.2-13.4" stroke="#232323" stroke-width="2.6"/><path d="M1.4 14.7l13.2-13.4" stroke="#f0555a" stroke-width="1.3"/></svg>
<span class="t" style="left:1170px;top:171.8px;font-size:13px;line-height:16.9px;color:#fff;letter-spacing:-0.34px;">3C_Brayen Nur Rahm...</span>
<div class="a" style="left:1148px;top:195px;width:160px;height:90px;background:#232323;"></div>
<svg class="a" style="left:1188px;top:200px;" width="80" height="80" viewBox="0 0 80 80" fill="none"><rect width="80" height="80" fill="#000"/><path d="M77.8 41.2 L77.6 43.1 L76.9 45 L76 46.8 L75.2 48.6 L74.6 50.3 L74.3 52.1 L74.1 54.1 L74 56 L73.6 58 L72.8 59.8 L71.6 61.4 L70.1 62.7 L68.5 63.8 L66.9 64.9 L65.5 66.1 L64.3 67.5 L63.2 69.1 L62.1 70.7 L60.8 72.2 L59.2 73.4 L57.4 74.2 L55.4 74.6 L53.5 74.7 L51.5 74.9 L49.7 75.2 L48 75.8 L46.2 76.6 L44.4 77.5 L42.5 78.2 L40.6 78.4 L38.7 78.2 L36.8 77.5 L35 76.6 L33.2 75.8 L31.5 75.2 L29.7 74.9 L27.7 74.7 L25.8 74.6 L23.8 74.2 L22 73.4 L20.4 72.2 L19.1 70.7 L18 69.1 L16.9 67.5 L15.7 66.1 L14.3 64.9 L12.7 63.8 L11.1 62.7 L9.6 61.4 L8.4 59.8 L7.6 58 L7.2 56 L7.1 54.1 L6.9 52.1 L6.6 50.3 L6 48.6 L5.2 46.8 L4.3 45 L3.6 43.1 L3.4 41.2 L3.6 39.3 L4.3 37.4 L5.2 35.6 L6 33.8 L6.6 32.1 L6.9 30.3 L7.1 28.3 L7.2 26.4 L7.6 24.4 L8.4 22.6 L9.6 21 L11.1 19.7 L12.7 18.6 L14.3 17.5 L15.7 16.3 L16.9 14.9 L18 13.3 L19.1 11.7 L20.4 10.2 L22 9 L23.8 8.2 L25.8 7.8 L27.7 7.7 L29.7 7.5 L31.5 7.2 L33.2 6.6 L35 5.8 L36.8 4.9 L38.7 4.2 L40.6 4 L42.5 4.2 L44.4 4.9 L46.2 5.8 L48 6.6 L49.7 7.2 L51.5 7.5 L53.5 7.7 L55.4 7.8 L57.4 8.2 L59.2 9 L60.8 10.2 L62.1 11.7 L63.2 13.3 L64.3 14.9 L65.5 16.3 L66.9 17.5 L68.5 18.6 L70.1 19.7 L71.6 21 L72.8 22.6 L73.6 24.4 L74 26.4 L74.1 28.3 L74.3 30.3 L74.6 32.1 L75.2 33.8 L76 35.6 L76.9 37.4 L77.6 39.3z" fill="#8cc63f" stroke="#27360f" stroke-width="1.6"/><path d="M40.6 28.6 L42.7 33.3 L46.9 30.3 L46.4 35.4 L51.5 34.9 L48.5 39.1 L53.2 41.2 L48.5 43.3 L51.5 47.5 L46.4 47 L46.9 52.1 L42.7 49.1 L40.6 53.8 L38.5 49.1 L34.3 52.1 L34.8 47 L29.7 47.5 L32.7 43.3 L28 41.2 L32.7 39.1 L29.7 34.9 L34.8 35.4 L34.3 30.3 L38.5 33.3z" fill="#4f8a1e"/><circle cx="40.6" cy="41.2" r="6.8" fill="#67a52c"/><circle cx="40.6" cy="41.2" r="4.6" fill="none" stroke="#3f7417" stroke-width="1"/><circle cx="40.6" cy="41.2" r="1.6" fill="#2f5a12"/><path d="M33.4 25.8A17 17 0 0 0 32.6 56.2" stroke="#f4b942" stroke-width="3.2" stroke-dasharray="2.3 1"/><path d="M49.8 24A19.5 19.5 0 0 1 47.9 59.3" stroke="#2f9a50" stroke-width="3.2"/><path d="M49.8 24A19.5 19.5 0 0 1 47.9 59.3" stroke="#e6efe6" stroke-width="2.6" stroke-dasharray="1.6 2.2"/><path id="lg1" d="M17.8 52.8A25.6 25.6 0 1 1 63.6 52.4"/><text font-family="Liberation Sans,sans-serif" font-weight="bold" font-size="5.6" fill="#2c4210" textLength="102" lengthAdjust="spacingAndGlyphs"><textPath href="#lg1" textLength="102" lengthAdjust="spacingAndGlyphs">UNIVERSITAS MUHAMMADIYAH GOMBONG</textPath></text><path id="lg2" d="M24.6 60.4A54.5 54.5 0 0 0 56.7 60.4"/><text font-family="Liberation Sans,sans-serif" font-weight="bold" font-size="4.8" fill="#2c4210" textLength="31.5" lengthAdjust="spacing"><textPath href="#lg2" textLength="31.5" lengthAdjust="spacing">FAKULTAS</textPath></text><path id="lg3" d="M20.8 65.2A47.5 47.5 0 0 0 60.3 65.2"/><text font-family="Liberation Sans,sans-serif" font-weight="bold" font-size="4.4" fill="#3f5c18" textLength="39" lengthAdjust="spacingAndGlyphs"><textPath href="#lg3" textLength="39" lengthAdjust="spacingAndGlyphs">ILMU KESEHATAN</textPath></text><path d="M17.8 56.6 L18.2 57.7 L19.4 57.8 L18.5 58.5 L18.8 59.7 L17.8 59 L16.8 59.7 L17.1 58.5 L16.2 57.8 L17.4 57.7z" fill="#27360f"/><path d="M62.9 56.6 L63.3 57.7 L64.5 57.8 L63.6 58.5 L63.9 59.7 L62.9 59 L61.9 59.7 L62.2 58.5 L61.3 57.8 L62.5 57.7z" fill="#27360f"/></svg>
<div class="a" style="left:1148px;top:265.5px;width:94px;height:19.5px;background:rgba(48,48,48,.86);"></div>
<span class="t" style="left:1152.5px;top:267.8px;font-size:13px;line-height:16.9px;color:#fff;letter-spacing:-0.21px;">dekanatfikes1 .</span>
<div class="a" style="left:1148px;top:291px;width:160px;height:90px;background:#232323;"></div>
<span class="t" style="left:1178px;top:326.8px;font-size:15px;line-height:19.5px;color:#fff;font-weight:bold;letter-spacing:0.1px;word-spacing:3px;">Nur Indarwati</span>
<div class="a" style="left:1148px;top:361.5px;width:105px;height:19.5px;background:#2e2e2e;"></div>
<svg class="a" style="left:1150px;top:363px;" width="16" height="16" viewBox="0 0 16 16" fill="none"><path d="M8 1.8a3 3 0 0 1 3 3v4.2a3 3 0 0 1-1.3 2.5l-.5 .5h-2.4l-.5-.5a3 3 0 0 1-1.3-2.5v-4.2a3 3 0 0 1 3-3z" fill="#f0555a"/><rect x="5.3" y="12.8" width="5.7" height="1.3" fill="#f0555a"/><path d="M1.4 14.7l13.2-13.4" stroke="#232323" stroke-width="2.6"/><path d="M1.4 14.7l13.2-13.4" stroke="#f0555a" stroke-width="1.3"/></svg>
<span class="t" style="left:1170px;top:363.8px;font-size:13px;line-height:16.9px;color:#fff;letter-spacing:-0.03px;">Nur Indarwati</span>
<div class="a" style="left:1148px;top:387px;width:160px;height:90px;background:#232323;"></div>
<span class="t" style="left:1163.5px;top:422.8px;font-size:15px;line-height:19.5px;color:#fff;font-weight:bold;letter-spacing:0.08px;word-spacing:3px;">Nur alfi Mukaro...</span>
<div class="a" style="left:1148px;top:457.5px;width:143px;height:19.5px;background:#2e2e2e;"></div>
<svg class="a" style="left:1150px;top:459px;" width="16" height="16" viewBox="0 0 16 16" fill="none"><path d="M8 1.8a3 3 0 0 1 3 3v4.2a3 3 0 0 1-1.3 2.5l-.5 .5h-2.4l-.5-.5a3 3 0 0 1-1.3-2.5v-4.2a3 3 0 0 1 3-3z" fill="#f0555a"/><rect x="5.3" y="12.8" width="5.7" height="1.3" fill="#f0555a"/><path d="M1.4 14.7l13.2-13.4" stroke="#232323" stroke-width="2.6"/><path d="M1.4 14.7l13.2-13.4" stroke="#f0555a" stroke-width="1.3"/></svg>
<span class="t" style="left:1170px;top:459.8px;font-size:13px;line-height:16.9px;color:#fff;letter-spacing:0.09px;">Nur alfi Mukaromah</span>
<div class="a" style="left:1148px;top:483px;width:160px;height:90px;background:#232323;"></div>
<svg class="a" style="left:1188px;top:488px;" width="80" height="80" viewBox="0 0 80 80" fill="none"><defs><clipPath id="gc"><rect width="80" height="80"/></clipPath><linearGradient id="gb" x1="0" y1="0" x2="1" y2="0"><stop offset="0" stop-color="#cdb9ac"/><stop offset="1" stop-color="#dccbc0"/></linearGradient><linearGradient id="gw" x1="0" y1="0" x2="1" y2="1"><stop offset="0" stop-color="#6a3423"/><stop offset="1" stop-color="#351711"/></linearGradient></defs><g clip-path="url(#gc)"><rect width="80" height="80" fill="url(#gb)"/><path d="M23.6 12.9 L49.4 0 L80 0 L80 29.7 L69.8 32.1 L63.8 18.9 L51.8 10.6 L27.8 21.9z" fill="url(#gw)"/><path d="M27.8 21.9 L23.6 12.9 L50.6 0 L50.6 10" fill="none" stroke="#f3efec" stroke-width=".9"/><path d="M0 58.5 L9.8 57.9 L26.6 59.7 L26.6 80.1 L0 80.1z" fill="#1b1b1d"/><path d="M44.6 11.5C59 10.6 66.2 22.5 68.6 34.5C70.4 46.5 75.8 52.5 80 54.9L80 80.1L25.4 80.1C26.6 66.9 31.4 51.3 30.8 34.5C30.2 21.3 36.2 12.4 44.6 11.5z" fill="#e9e7ef"/><path d="M59 34.5 L63.8 30.9 L68.6 45.3 L66.2 65.7 L56.6 65.7 L61.4 48.9z" fill="#d9d3e2" opacity=".7"/><path d="M33.2 30.9C33.8 20.7 39.8 15.9 44.6 16.5L51.8 26.1L54.8 36.9L32 36.9C32 34.5 32.6 32.7 33.2 30.9z" fill="#e3bba3"/><path d="M44.6 16.3 L54.2 30.9 L55.4 38.1 L59 35.7 L54.2 18.9 L48.2 14.1z" fill="#e9e7ef"/><path d="M33.2 32.4h3.6M44.6 32.4h4.4" stroke="#3a2520" stroke-width="1.1"/><path d="M33 29.7h4M43.4 29.1h5.5" stroke="#5a3d33" stroke-width=".6"/><path d="M31.4 38.7C37.4 35.1 48.2 36.3 56 39.3L56.6 46.5C54.2 52.5 48.2 54.9 43.4 54.9C37.4 52.5 32 46.5 31.4 38.7z" fill="#f3f2f3"/><path d="M42.2 36.9L42.8 54.3" stroke="#dcd9dd" stroke-width=".7"/><path d="M12.2 38.1 L14.6 37.9 L18.5 51.3 L15.8 52.3z" fill="#ebc8b0" stroke="#ebc8b0" stroke-width="2.2" stroke-linejoin="round"/><path d="M26 40.3 L27.6 41.1 L23.3 52.5 L20.9 51.3z" fill="#ebc8b0" stroke="#ebc8b0" stroke-width="2.2" stroke-linejoin="round"/><path d="M9.8 54.3 L15.8 51.9 L24.2 52.5 L26 57.3 L24.2 66.9 L12.2 66.9 L9.8 59.7z" fill="#ebc8b0" stroke="#ebc8b0" stroke-width="3" stroke-linejoin="round"/><path d="M69.8 54.9 L80 53.7 L80 80.1 L68.6 80.1z" fill="#f0f3f5"/><circle cx="74.6" cy="60.3" r=".8" fill="#4aa0b5"/><circle cx="78.2" cy="56.7" r=".8" fill="#4aa0b5"/></g></svg>
<div class="a" style="left:1148px;top:553.5px;width:155px;height:19.5px;background:rgba(48,48,48,.86);"></div>
<svg class="a" style="left:1150px;top:555px;" width="16" height="16" viewBox="0 0 16 16" fill="none"><path d="M8 1.8a3 3 0 0 1 3 3v4.2a3 3 0 0 1-1.3 2.5l-.5 .5h-2.4l-.5-.5a3 3 0 0 1-1.3-2.5v-4.2a3 3 0 0 1 3-3z" fill="#f0555a"/><rect x="5.3" y="12.8" width="5.7" height="1.3" fill="#f0555a"/><path d="M1.4 14.7l13.2-13.4" stroke="#232323" stroke-width="2.6"/><path d="M1.4 14.7l13.2-13.4" stroke="#f0555a" stroke-width="1.3"/></svg>
<span class="t" style="left:1170px;top:555.8px;font-size:13px;line-height:16.9px;color:#fff;letter-spacing:-0.01px;">Nurulfadhilah Azzahro</span>
<div class="a" style="left:1148px;top:579px;width:160px;height:90px;background:#232323;"></div>
<div class="a" style="left:1148px;top:649.5px;width:160px;height:19.5px;background:rgba(48,48,48,.86);"></div>
<svg class="a" style="left:1150px;top:651px;" width="16" height="16" viewBox="0 0 16 16" fill="none"><path d="M8 1.8a3 3 0 0 1 3 3v4.2a3 3 0 0 1-1.3 2.5l-.5 .5h-2.4l-.5-.5a3 3 0 0 1-1.3-2.5v-4.2a3 3 0 0 1 3-3z" fill="#f0555a"/><rect x="5.3" y="12.8" width="5.7" height="1.3" fill="#f0555a"/><path d="M1.4 14.7l13.2-13.4" stroke="#232323" stroke-width="2.6"/><path d="M1.4 14.7l13.2-13.4" stroke="#f0555a" stroke-width="1.3"/></svg>
<span class="t" style="left:1170px;top:651.8px;font-size:13px;line-height:16.9px;color:#fff;letter-spacing:-0.07px;">Alviogariska Yuda Sa...</span>
<div class="a" style="left:1191px;top:675px;width:74px;height:34px;background:#111;border-radius:4px"></div>
<svg class="a" style="left:1221px;top:686px;" width="14" height="9" viewBox="0 0 14 9" fill="none"><path d="M1 1.5l6 5.5 6-5.5" stroke="#555a66" stroke-width="1.5"/></svg>
<span class="t" style="left:1074.5px;top:649.3px;font-size:19.5px;line-height:25.4px;color:rgba(160,160,160,.72);letter-spacing:0.07px;">Activate Windows</span>
<span class="t" style="left:1073px;top:675.5px;font-size:14.5px;line-height:18.9px;color:rgba(160,160,160,.72);letter-spacing:0.19px;">Go to Settings to activate Windows.</span>
<!-- toolbar -->
<svg class="a" style="left:38px;top:719px;" width="22" height="27" viewBox="0 0 22 27" fill="none"><rect x="5" y="2" width="7" height="14" rx="3.5" fill="#cfcfcf"/><path d="M2 11.5a6.5 6.5 0 0 0 13 0 M8.5 18v5.5 M5 24h7" stroke="#cfcfcf" stroke-width="1.5"/><circle cx="15" cy="6" r="5.5" fill="#e02828"/><path d="M15 3v3.5" stroke="#fff" stroke-width="1.4"/><circle cx="15" cy="8.7" r=".8" fill="#fff"/></svg>
<svg class="a" style="left:73.5px;top:730px;" width="9" height="6" viewBox="0 0 9 6" fill="none"><path d="M1 4.8l3.5-3.5 3.5 3.5" stroke="#d0d0d0" stroke-width="1.5"/></svg>
<span class="t" style="left:30.4px;top:747.1px;font-size:13px;line-height:16.9px;color:#d9d9d9;letter-spacing:-0.49px;">Audio</span>
<svg class="a" style="left:125px;top:718px;" width="28" height="27" viewBox="0 0 28 27" fill="none"><rect x="2" y="6.5" width="17" height="14" rx="2.5" fill="#cfcfcf"/><path d="M19.5 12l6-4v11l-6-4z" fill="#cfcfcf"/><path d="M2.4 25L25.5 2.4" stroke="#e8474c" stroke-width="1.7"/></svg>
<span class="t" style="left:109px;top:747.1px;font-size:13px;line-height:16.9px;color:#d9d9d9;letter-spacing:-0.51px;">Start Video</span>
<svg class="a" style="left:259px;top:722px;" width="20" height="21" viewBox="0 0 20 21" fill="none"><path d="M10 .5l9 3v6.5c0 5.5-4 9-9 10.5-5-1.5-9-5-9-10.5v-6.5z" fill="#cfcfcf"/><path d="M10 3.2v7.3h6.3v-5.2z M10 10.5h-6.3c.3 3.5 2.8 6 6.3 7.4z" fill="#1a1a1a"/></svg>
<span class="t" style="left:246.8px;top:747.1px;font-size:13px;line-height:16.9px;color:#d9d9d9;letter-spacing:-0.57px;">Security</span>
<svg class="a" style="left:361px;top:722px;" width="26" height="20" viewBox="0 0 26 20" fill="none"><circle cx="8.5" cy="5.5" r="4.5" fill="#cfcfcf"/><path d="M.5 18.5c0-5 3-7.5 8-7.5s8 2.5 8 7.5z" fill="#cfcfcf"/><circle cx="19" cy="7" r="3.6" fill="#cfcfcf"/><path d="M17.8 18.5c0-3-.8-5-2.6-6.4 1-.6 2.3-.9 3.8-.9 4 0 6 2.3 6 7.3z" fill="#cfcfcf"/></svg>
<span class="t" style="left:390.6px;top:722.3px;font-size:12.5px;line-height:16.2px;color:#d9d9d9;letter-spacing:-0.4px;">58</span>
<svg class="a" style="left:422.5px;top:730px;" width="9" height="6" viewBox="0 0 9 6" fill="none"><path d="M1 4.8l3.5-3.5 3.5 3.5" stroke="#d0d0d0" stroke-width="1.5"/></svg>
<span class="t" style="left:343.2px;top:747.1px;font-size:13px;line-height:16.9px;color:#d9d9d9;letter-spacing:-0.54px;">Participants</span>
<svg class="a" style="left:469px;top:722px;" width="20" height="20" viewBox="0 0 20 20" fill="none"><rect x="1" y="10" width="4.5" height="9" fill="#cfcfcf"/><rect x="7.5" y="1" width="4.5" height="18" fill="#cfcfcf"/><rect x="14" y="6.5" width="4.5" height="12.5" fill="#cfcfcf"/></svg>
<span class="t" style="left:466.6px;top:747.1px;font-size:13px;line-height:16.9px;color:#d9d9d9;letter-spacing:-0.92px;">Polls</span>
<svg class="a" style="left:553px;top:722px;" width="22" height="20" viewBox="0 0 22 20" fill="none"><path d="M4 .8h14a3.2 3.2 0 0 1 3.2 3.2v6.5a3.2 3.2 0 0 1-3.2 3.2h-8l-5 4.3v-4.3h-1a3.2 3.2 0 0 1-3.2-3.2v-6.5a3.2 3.2 0 0 1 3.2-3.2z" fill="#cfcfcf"/></svg>
<svg class="a" style="left:592.5px;top:730px;" width="9" height="6" viewBox="0 0 9 6" fill="none"><path d="M1 4.8l3.5-3.5 3.5 3.5" stroke="#d0d0d0" stroke-width="1.5"/></svg>
<span class="t" style="left:552px;top:747.1px;font-size:13px;line-height:16.9px;color:#d9d9d9;letter-spacing:-1.15px;">Chat</span>
<div class="a" style="left:645.8px;top:723px;width:24.5px;height:18px;background:#23d75b;border-radius:4px"></div>
<svg class="a" style="left:652px;top:726px;" width="12" height="12" viewBox="0 0 12 12" fill="none"><path d="M6 10.5v-8 M2.5 5.8l3.5-3.5 3.5 3.5" stroke="#1a1a1a" stroke-width="1.9"/></svg>
<svg class="a" style="left:690.5px;top:730px;" width="9" height="6" viewBox="0 0 9 6" fill="none"><path d="M1 4.8l3.5-3.5 3.5 3.5" stroke="#d0d0d0" stroke-width="1.5"/></svg>
<span class="t" style="left:623.4px;top:747.1px;font-size:13px;line-height:16.9px;color:#23d75b;letter-spacing:-1px;">Share Screen</span>
<svg class="a" style="left:736px;top:721px;" width="22" height="22" viewBox="0 0 22 22" fill="none"><circle cx="11" cy="11" r="9.7" stroke="#cfcfcf" stroke-width="1.3"/><circle cx="11" cy="11" r="7.5" fill="#cfcfcf"/></svg>
<span class="t" style="left:728px;top:747.1px;font-size:13px;line-height:16.9px;color:#d9d9d9;letter-spacing:-0.98px;">Record</span>
<div class="a" style="left:822px;top:723px;width:24px;height:18px;background:#c9c9c9;border-radius:3px"></div>
<span class="t" style="left:827.2px;top:725.9px;font-size:9.5px;line-height:12.3px;color:#333;font-weight:bold;letter-spacing:-0.22px;">CC</span>
<svg class="a" style="left:865.5px;top:730px;" width="9" height="6" viewBox="0 0 9 6" fill="none"><path d="M1 4.8l3.5-3.5 3.5 3.5" stroke="#d0d0d0" stroke-width="1.5"/></svg>
<span class="t" style="left:795.3px;top:747.1px;font-size:13px;line-height:16.9px;color:#d9d9d9;letter-spacing:-0.75px;">Show Captions</span>
<svg class="a" style="left:911px;top:720px;" width="24" height="24" viewBox="0 0 24 24" fill="none"><circle cx="11" cy="12.5" r="9.2" fill="#cfcfcf"/><circle cx="8" cy="10.5" r="1.2" fill="#1a1a1a"/><circle cx="14" cy="10.5" r="1.2" fill="#1a1a1a"/><path d="M7 14.5a4.2 4.2 0 0 0 8 0" stroke="#1a1a1a" stroke-width="1.3"/><circle cx="19.8" cy="4" r="4.6" fill="#1a1a1a"/><path d="M19.8 1v6 M16.8 4h6" stroke="#cfcfcf" stroke-width="1.3"/></svg>
<span class="t" style="left:896.6px;top:747.1px;font-size:13px;line-height:16.9px;color:#d9d9d9;letter-spacing:-0.98px;">Reactions</span>
<svg class="a" style="left:992px;top:724px;" width="20" height="19" viewBox="0 0 20 19" fill="none"><path d="M6 2.5h-2.5a2 2 0 0 0-2 2v2.5 M12 16.5h2.5a2 2 0 0 0 2-2v-2.5 M16.5 8v-.5" stroke="#cfcfcf" stroke-width="1.7" stroke-linecap="round"/><circle cx="13.5" cy="4.5" r="2.3" stroke="#cfcfcf" stroke-width="1.5"/><circle cx="4" cy="13.5" r="2.3" stroke="#cfcfcf" stroke-width="1.5"/></svg>
<span class="t" style="left:988px;top:747.1px;font-size:13px;line-height:16.9px;color:#d9d9d9;letter-spacing:-0.88px;">Apps</span>
<svg class="a" style="left:1080px;top:722px;" width="22" height="19" viewBox="0 0 22 19" fill="none"><path d="M9 14.5h-5a2.5 2.5 0 0 1-2.5-2.5v-8a2.5 2.5 0 0 1 2.5-2.5h13a2.5 2.5 0 0 1 2.5 2.5v6" stroke="#cfcfcf" stroke-width="1.5"/><rect x="9.5" y="12" width="11.5" height="4.5" rx="2" fill="#cfcfcf"/></svg>
<svg class="a" style="left:1123.3px;top:730px;" width="9" height="6" viewBox="0 0 9 6" fill="none"><path d="M1 4.8l3.5-3.5 3.5 3.5" stroke="#d0d0d0" stroke-width="1.5"/></svg>
<span class="t" style="left:1057px;top:747.1px;font-size:13px;line-height:16.9px;color:#d9d9d9;letter-spacing:-0.5px;">Whiteboards</span>
<svg class="a" style="left:1170px;top:729px;" width="24" height="6" viewBox="0 0 24 6" fill="none"><circle cx="3.6" cy="3" r="1.7" fill="#cfcfcf"/><circle cx="12" cy="3" r="1.7" fill="#cfcfcf"/><circle cx="20.4" cy="3" r="1.7" fill="#cfcfcf"/></svg>
<span class="t" style="left:1168px;top:747.1px;font-size:13px;line-height:16.9px;color:#d9d9d9;letter-spacing:-0.54px;">More</span>
<div class="a" style="left:1293px;top:728px;width:61px;height:27px;background:#b92225;border-radius:7px"></div>
<span class="t" style="left:1312.2px;top:733.5px;font-size:12.5px;line-height:16.2px;color:#fff;font-weight:bold;letter-spacing:-1.05px;">End</span>
</div>
</body>
</html>
